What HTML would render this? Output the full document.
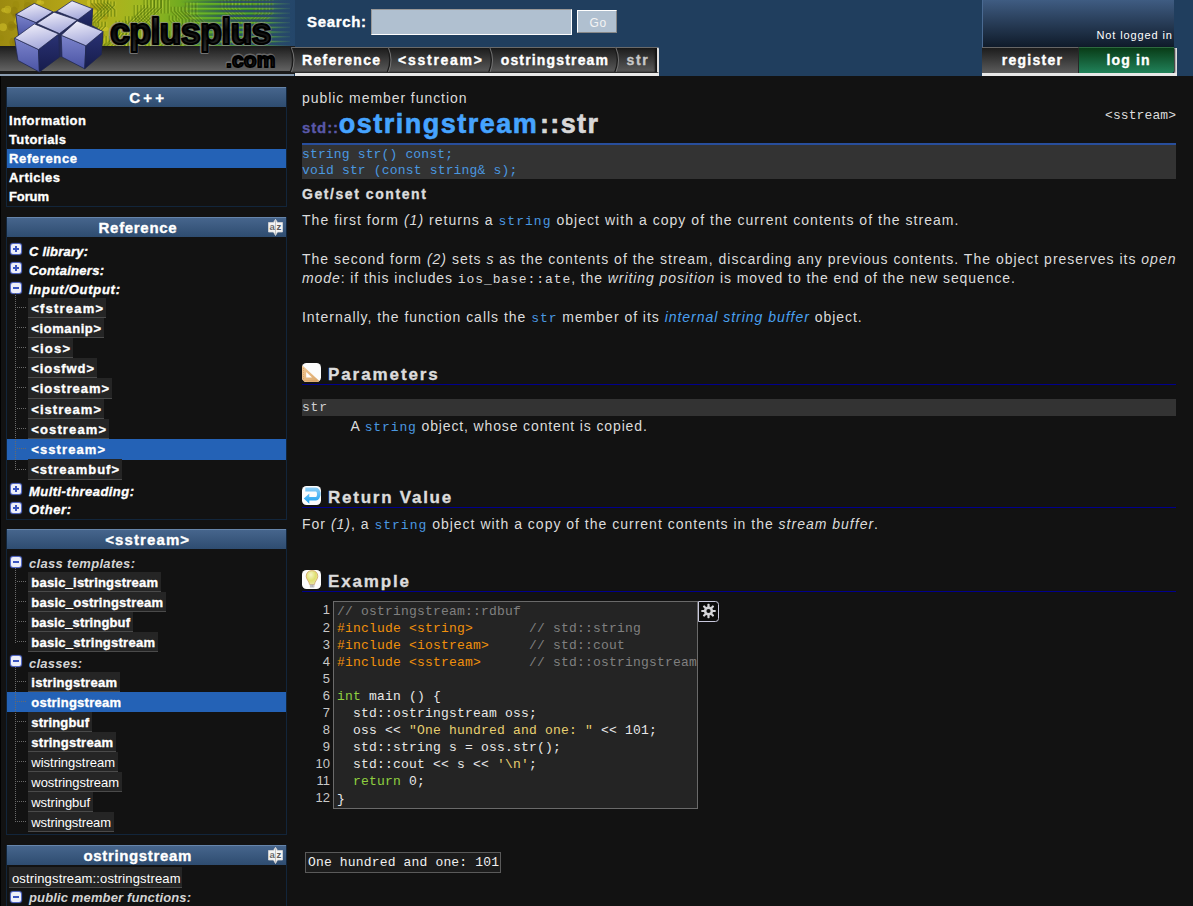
<!DOCTYPE html>
<html><head><meta charset="utf-8"><style>
*{margin:0;padding:0;box-sizing:border-box}
html,body{width:1193px;height:906px;overflow:hidden;background:#121212;font-family:"Liberation Sans",sans-serif;color:#dcdcdc}
body{position:relative}
.t{position:absolute;white-space:pre;line-height:normal}
.m{font-family:"Liberation Mono";font-size:13px}
#edge{position:absolute;left:0;top:0;width:1px;height:906px;background:#000}
#hdr{position:absolute;left:0;top:0;width:1193px;height:76px;background:#203e5e}
#logo{position:absolute;left:0;top:0;width:295px;height:76px;overflow:hidden}
#sinput{position:absolute;left:371px;top:9px;width:201px;height:26px;background:#b0c0d0;border-top:1px solid #999;border-left:1px solid #999;border-bottom:1px solid #fff;border-right:1px solid #fff}
#go{position:absolute;left:577px;top:10px;width:40px;height:23px;background:#b0c0d0;border-top:1px solid #fff;border-left:1px solid #fff;border-bottom:1px solid #888;border-right:1px solid #888}
#crumbs{position:absolute;left:291px;top:47px;width:368px;height:26px;background:linear-gradient(#1c1c1c,#5a5a5a);border-top:1px solid #6a6a6a;border-bottom:1px solid #2a2a2a;border-right:2px solid #e0e0e0;border-radius:0 2px 0 0;box-shadow:inset -2px 0 2px #111}
#crumbline{position:absolute;left:295px;top:73px;width:364px;height:3px;background:#e8e8e8}
#login{position:absolute;left:982px;top:0;width:192px;height:47px;background:linear-gradient(#3f5c82,#0f1b2a);border-left:1px solid #4a6a92}
#reg{position:absolute;left:982px;top:47px;width:97px;height:26px;background:linear-gradient(#1c1c1c,#5c5c5c);border-top:1px solid #666;border-right:1px solid #2a2a2a}
#lin{position:absolute;left:1079px;top:47px;width:95px;height:26px;background:linear-gradient(#093c17,#21825a);border-top:1px solid #2e6a40;border-radius:0 0 3px 0;box-shadow:1px 1px 2px #111}
#loginline{position:absolute;left:982px;top:73px;width:195px;height:3px;background:#e8e8e8}
.box{position:absolute;left:6px;width:281px;border:1px solid #12253a;border-top:none}
.bh{position:absolute;left:7px;width:279px;height:20px;background:linear-gradient(#46658c,#2e4c70);border-top:1px solid #6685ab}
.az{position:absolute;right:2px;top:1px;width:17px;height:17px}
.sel{position:absolute;left:7px;width:279px;background:#2462b6}
.pm{position:absolute;left:11px;width:10px;height:10px;border-radius:2px;background:#eceef8;box-shadow:0 0 1px 1px #5a72d8}
.pm:before{content:"";position:absolute;left:2px;top:4px;width:6px;height:2px;background:#3a54c0}
.pm.plus:after{content:"";position:absolute;left:4px;top:2px;width:2px;height:6px;background:#3a54c0}
.li{position:absolute;left:28px;background:#252525;border-bottom:1px solid #4a4a4a}
.vl{position:absolute;left:15px;width:1px;border-left:1px dotted #6a6a6a}
.hd{position:absolute;left:17px;width:9px;border-top:1px dotted #6a6a6a}
.proto{position:absolute;left:302px;width:874px;background:#333;border-top:2px solid #284e9c}
.navy{position:absolute;left:302px;width:874px;height:1px;background:#00008c}
.ico{position:absolute;left:302px;width:19px;height:19px}
.code{position:absolute;background:#242424;border:1px solid #6a6a6a}
.gear{position:absolute;width:21px;height:21px}
.out{position:absolute;border:1px solid #5a5a5a;background:#1c1c1c}
</style></head><body>
<div id="edge"></div>
<div id="hdr"></div>
<div id="logo">
<svg width="295" height="76" viewBox="0 0 295 76">
<defs>
<linearGradient id="ylw" x1="0" x2="295" y1="0" y2="0" gradientUnits="userSpaceOnUse"><stop offset="0" stop-color="#9c8a10"/><stop offset="0.27" stop-color="#b8aa18"/><stop offset="0.47" stop-color="#a0b820"/><stop offset="0.68" stop-color="#5aa420"/><stop offset="0.85" stop-color="#348a24"/><stop offset="0.95" stop-color="#2a5a62"/><stop offset="1" stop-color="#24466a"/></linearGradient>
<linearGradient id="stripe" x1="0" x2="1" y1="0" y2="0"><stop offset="0" stop-color="#2a4a6a" stop-opacity="0"/><stop offset="0.45" stop-color="#2a4a6a" stop-opacity="0.85"/><stop offset="1" stop-color="#2a4a6a" stop-opacity="1"/></linearGradient>
<linearGradient id="fade" x1="0" x2="1" y1="0" y2="0"><stop offset="0" stop-color="#24466a" stop-opacity="0"/><stop offset="1" stop-color="#24466a" stop-opacity="1"/></linearGradient>
<linearGradient id="gbar" x1="0" x2="0" y1="0" y2="1"><stop offset="0" stop-color="#1c1c1c"/><stop offset="1" stop-color="#666"/></linearGradient>
<linearGradient id="ctop" x1="0" x2="0.3" y1="0" y2="1"><stop offset="0" stop-color="#f6f4fc"/><stop offset="1" stop-color="#a8acdc"/></linearGradient>
<linearGradient id="cl" x1="0" x2="0" y1="0" y2="1"><stop offset="0" stop-color="#7c84cc"/><stop offset="1" stop-color="#4a54a4"/></linearGradient>
<linearGradient id="cr" x1="0" x2="0" y1="0" y2="1"><stop offset="0" stop-color="#2a3274"/><stop offset="1" stop-color="#161c4c"/></linearGradient>
<linearGradient id="txt" x1="0" x2="0" y1="0" y2="1"><stop offset="0" stop-color="#505050"/><stop offset="0.45" stop-color="#080808"/><stop offset="1" stop-color="#303030"/></linearGradient>
</defs>
<rect x="0" y="0" width="295" height="47" fill="url(#ylw)"/>
<ellipse cx="35.6" cy="6.9" rx="4.6" ry="2.2" fill="#8a7808" opacity="0.45"/><ellipse cx="40.2" cy="2.7" rx="4.0" ry="2.1" fill="#e0d030" opacity="0.45"/><ellipse cx="46.0" cy="11.1" rx="4.2" ry="2.2" fill="#8a7808" opacity="0.45"/><ellipse cx="104.2" cy="29.0" rx="4.3" ry="2.2" fill="#e0d030" opacity="0.45"/><ellipse cx="5.5" cy="10.2" rx="4.2" ry="2.4" fill="#e0d030" opacity="0.45"/><ellipse cx="15.9" cy="5.4" rx="3.2" ry="4.4" fill="#9a8a0c" opacity="0.45"/><ellipse cx="11.3" cy="26.3" rx="2.8" ry="2.3" fill="#8a7808" opacity="0.45"/><ellipse cx="62.1" cy="28.5" rx="4.0" ry="3.6" fill="#d8c828" opacity="0.45"/><ellipse cx="51.2" cy="42.5" rx="3.4" ry="2.7" fill="#9a8a0c" opacity="0.45"/><ellipse cx="76.9" cy="11.2" rx="4.3" ry="3.6" fill="#d8c828" opacity="0.45"/><ellipse cx="80.2" cy="13.2" rx="5.9" ry="2.4" fill="#e0d030" opacity="0.45"/><ellipse cx="18.1" cy="15.7" rx="5.7" ry="3.3" fill="#8a7808" opacity="0.45"/><ellipse cx="84.1" cy="26.4" rx="5.5" ry="2.9" fill="#d8c828" opacity="0.45"/><ellipse cx="65.4" cy="26.7" rx="3.8" ry="4.5" fill="#d8c828" opacity="0.45"/><ellipse cx="52.2" cy="30.6" rx="2.2" ry="4.1" fill="#e0d030" opacity="0.45"/><ellipse cx="31.3" cy="17.7" rx="4.7" ry="2.1" fill="#e0d030" opacity="0.45"/><ellipse cx="39.1" cy="28.1" rx="4.0" ry="2.7" fill="#d8c828" opacity="0.45"/><ellipse cx="14.2" cy="11.4" rx="3.6" ry="4.6" fill="#8a7808" opacity="0.45"/><ellipse cx="18.3" cy="18.5" rx="3.1" ry="2.4" fill="#e0d030" opacity="0.45"/><ellipse cx="95.0" cy="12.8" rx="3.7" ry="3.1" fill="#e0d030" opacity="0.45"/><ellipse cx="105.4" cy="6.9" rx="2.7" ry="2.7" fill="#9a8a0c" opacity="0.45"/><ellipse cx="1.3" cy="38.2" rx="2.7" ry="2.8" fill="#9a8a0c" opacity="0.45"/><ellipse cx="46.1" cy="17.0" rx="4.3" ry="4.9" fill="#8a7808" opacity="0.45"/><ellipse cx="50.2" cy="40.1" rx="5.8" ry="4.0" fill="#e0d030" opacity="0.45"/><ellipse cx="43.8" cy="18.1" rx="3.9" ry="3.2" fill="#9a8a0c" opacity="0.45"/><ellipse cx="7.4" cy="9.6" rx="2.6" ry="3.0" fill="#8a7808" opacity="0.45"/><ellipse cx="11.3" cy="26.1" rx="4.1" ry="4.8" fill="#8a7808" opacity="0.45"/><ellipse cx="7.7" cy="9.6" rx="3.5" ry="3.9" fill="#d8c828" opacity="0.45"/><ellipse cx="66.3" cy="21.8" rx="2.5" ry="3.5" fill="#e0d030" opacity="0.45"/><ellipse cx="52.8" cy="14.3" rx="2.6" ry="4.2" fill="#d8c828" opacity="0.45"/><ellipse cx="52.6" cy="31.8" rx="4.1" ry="2.6" fill="#d8c828" opacity="0.45"/><ellipse cx="16.1" cy="25.0" rx="2.1" ry="3.6" fill="#8a7808" opacity="0.45"/><ellipse cx="76.6" cy="12.0" rx="3.5" ry="2.5" fill="#9a8a0c" opacity="0.45"/><ellipse cx="58.6" cy="35.8" rx="3.3" ry="2.7" fill="#9a8a0c" opacity="0.45"/><ellipse cx="88.7" cy="37.6" rx="5.0" ry="2.7" fill="#e0d030" opacity="0.45"/><ellipse cx="39.1" cy="1.3" rx="2.1" ry="2.8" fill="#d8c828" opacity="0.45"/><ellipse cx="21.3" cy="27.8" rx="3.4" ry="4.4" fill="#d8c828" opacity="0.45"/><ellipse cx="105.1" cy="16.8" rx="2.9" ry="2.7" fill="#9a8a0c" opacity="0.45"/><ellipse cx="37.2" cy="22.2" rx="5.9" ry="3.8" fill="#8a7808" opacity="0.45"/><ellipse cx="52.7" cy="30.0" rx="5.2" ry="2.3" fill="#8a7808" opacity="0.45"/><ellipse cx="100.1" cy="36.0" rx="5.0" ry="3.4" fill="#9a8a0c" opacity="0.45"/><ellipse cx="47.7" cy="29.2" rx="2.3" ry="4.8" fill="#e0d030" opacity="0.45"/><ellipse cx="50.9" cy="34.2" rx="2.3" ry="2.5" fill="#9a8a0c" opacity="0.45"/><ellipse cx="3.0" cy="27.2" rx="3.9" ry="4.0" fill="#e0d030" opacity="0.45"/><ellipse cx="72.3" cy="16.1" rx="4.2" ry="2.4" fill="#8a7808" opacity="0.45"/><ellipse cx="87.9" cy="33.4" rx="2.4" ry="4.2" fill="#9a8a0c" opacity="0.45"/><ellipse cx="47.7" cy="40.1" rx="5.3" ry="2.6" fill="#d8c828" opacity="0.45"/><ellipse cx="23.4" cy="23.1" rx="5.1" ry="3.0" fill="#e0d030" opacity="0.45"/><ellipse cx="91.8" cy="2.8" rx="5.0" ry="4.7" fill="#e0d030" opacity="0.45"/><ellipse cx="91.0" cy="40.4" rx="2.5" ry="2.5" fill="#8a7808" opacity="0.45"/><ellipse cx="96.0" cy="35.7" rx="4.4" ry="4.3" fill="#9a8a0c" opacity="0.45"/><ellipse cx="19.0" cy="21.8" rx="4.9" ry="3.7" fill="#d8c828" opacity="0.45"/><ellipse cx="75.1" cy="24.4" rx="3.9" ry="4.3" fill="#8a7808" opacity="0.45"/><ellipse cx="27.3" cy="12.7" rx="5.1" ry="3.5" fill="#8a7808" opacity="0.45"/><ellipse cx="83.6" cy="42.0" rx="3.8" ry="3.8" fill="#9a8a0c" opacity="0.45"/><ellipse cx="76.2" cy="20.8" rx="4.1" ry="3.4" fill="#9a8a0c" opacity="0.45"/><ellipse cx="76.9" cy="40.3" rx="5.8" ry="2.8" fill="#9a8a0c" opacity="0.45"/><ellipse cx="92.4" cy="6.3" rx="2.5" ry="3.3" fill="#8a7808" opacity="0.45"/><ellipse cx="73.8" cy="19.7" rx="2.9" ry="2.9" fill="#8a7808" opacity="0.45"/><ellipse cx="98.7" cy="7.1" rx="4.9" ry="4.0" fill="#9a8a0c" opacity="0.45"/><ellipse cx="27.8" cy="6.3" rx="3.9" ry="4.2" fill="#8a7808" opacity="0.45"/><ellipse cx="43.8" cy="22.4" rx="6.0" ry="4.5" fill="#9a8a0c" opacity="0.45"/><ellipse cx="77.7" cy="45.7" rx="3.6" ry="3.3" fill="#d8c828" opacity="0.45"/><ellipse cx="35.0" cy="33.2" rx="2.1" ry="3.7" fill="#e0d030" opacity="0.45"/><ellipse cx="77.3" cy="17.7" rx="4.1" ry="2.9" fill="#8a7808" opacity="0.45"/><ellipse cx="12.4" cy="42.3" rx="2.9" ry="4.6" fill="#8a7808" opacity="0.45"/><ellipse cx="29.2" cy="1.8" rx="5.1" ry="2.8" fill="#9a8a0c" opacity="0.45"/><ellipse cx="90.2" cy="39.1" rx="4.7" ry="4.8" fill="#e0d030" opacity="0.45"/><ellipse cx="16.4" cy="42.3" rx="4.3" ry="4.1" fill="#8a7808" opacity="0.45"/><ellipse cx="30.7" cy="36.8" rx="2.7" ry="4.7" fill="#d8c828" opacity="0.45"/>

<path d="M178.4,34.1 L178.4,46.5 L193.7,61.8 L193.7,68.3" stroke="#5a7a0c" stroke-width="1.3" fill="none" opacity="0.5"/><path d="M179.9,34.1 L179.9,46.5 L195.2,61.8 L195.2,68.3" stroke="#e0e858" stroke-width="0.8" fill="none" opacity="0.3"/><path d="M181.8,34.1 L181.8,46.5 L197.1,61.8 L197.1,68.3" stroke="#4a6a08" stroke-width="1.3" fill="none" opacity="0.5"/><path d="M183.3,34.1 L183.3,46.5 L198.6,61.8 L198.6,68.3" stroke="#e0e858" stroke-width="0.8" fill="none" opacity="0.3"/><path d="M185.2,34.1 L185.2,46.5 L200.5,61.8 L200.5,68.3" stroke="#5a7a0c" stroke-width="1.3" fill="none" opacity="0.5"/><path d="M186.7,34.1 L186.7,46.5 L202.0,61.8 L202.0,68.3" stroke="#e0e858" stroke-width="0.8" fill="none" opacity="0.3"/><path d="M231.2,5.2 L231.2,-7.5 L241.7,-18.0 L241.7,-23.1" stroke="#5a7a0c" stroke-width="1.3" fill="none" opacity="0.5"/><path d="M232.7,5.2 L232.7,-7.5 L243.2,-18.0 L243.2,-23.1" stroke="#e0e858" stroke-width="0.8" fill="none" opacity="0.3"/><path d="M234.6,5.2 L234.6,-7.5 L245.1,-18.0 L245.1,-23.1" stroke="#4a6a08" stroke-width="1.3" fill="none" opacity="0.5"/><path d="M236.1,5.2 L236.1,-7.5 L246.6,-18.0 L246.6,-23.1" stroke="#e0e858" stroke-width="0.8" fill="none" opacity="0.3"/><path d="M238.0,5.2 L238.0,-7.5 L248.5,-18.0 L248.5,-23.1" stroke="#5a7a0c" stroke-width="1.3" fill="none" opacity="0.5"/><path d="M239.5,5.2 L239.5,-7.5 L250.0,-18.0 L250.0,-23.1" stroke="#e0e858" stroke-width="0.8" fill="none" opacity="0.3"/><path d="M241.4,5.2 L241.4,-7.5 L251.9,-18.0 L251.9,-23.1" stroke="#4a6a08" stroke-width="1.3" fill="none" opacity="0.5"/><path d="M242.9,5.2 L242.9,-7.5 L253.4,-18.0 L253.4,-23.1" stroke="#e0e858" stroke-width="0.8" fill="none" opacity="0.3"/><path d="M244.8,5.2 L244.8,-7.5 L255.3,-18.0 L255.3,-23.1" stroke="#5a7a0c" stroke-width="1.3" fill="none" opacity="0.5"/><path d="M246.3,5.2 L246.3,-7.5 L256.8,-18.0 L256.8,-23.1" stroke="#e0e858" stroke-width="0.8" fill="none" opacity="0.3"/><path d="M248.2,5.2 L248.2,-7.5 L258.7,-18.0 L258.7,-23.1" stroke="#4a6a08" stroke-width="1.3" fill="none" opacity="0.5"/><path d="M249.7,5.2 L249.7,-7.5 L260.2,-18.0 L260.2,-23.1" stroke="#e0e858" stroke-width="0.8" fill="none" opacity="0.3"/><path d="M62.5,10.0 L62.5,15.8 L78.9,32.2 L78.9,40.1" stroke="#5a7a0c" stroke-width="1.3" fill="none" opacity="0.5"/><path d="M64.0,10.0 L64.0,15.8 L80.4,32.2 L80.4,40.1" stroke="#e0e858" stroke-width="0.8" fill="none" opacity="0.3"/><path d="M65.9,10.0 L65.9,15.8 L82.3,32.2 L82.3,40.1" stroke="#4a6a08" stroke-width="1.3" fill="none" opacity="0.5"/><path d="M67.4,10.0 L67.4,15.8 L83.8,32.2 L83.8,40.1" stroke="#e0e858" stroke-width="0.8" fill="none" opacity="0.3"/><path d="M69.3,10.0 L69.3,15.8 L85.7,32.2 L85.7,40.1" stroke="#5a7a0c" stroke-width="1.3" fill="none" opacity="0.5"/><path d="M70.8,10.0 L70.8,15.8 L87.2,32.2 L87.2,40.1" stroke="#e0e858" stroke-width="0.8" fill="none" opacity="0.3"/><path d="M72.7,10.0 L72.7,15.8 L89.1,32.2 L89.1,40.1" stroke="#4a6a08" stroke-width="1.3" fill="none" opacity="0.5"/><path d="M74.2,10.0 L74.2,15.8 L90.6,32.2 L90.6,40.1" stroke="#e0e858" stroke-width="0.8" fill="none" opacity="0.3"/><path d="M76.1,10.0 L76.1,15.8 L92.5,32.2 L92.5,40.1" stroke="#5a7a0c" stroke-width="1.3" fill="none" opacity="0.5"/><path d="M77.6,10.0 L77.6,15.8 L94.0,32.2 L94.0,40.1" stroke="#e0e858" stroke-width="0.8" fill="none" opacity="0.3"/><path d="M86.4,28.4 L86.4,23.1 L104.0,5.4 L104.0,1.4" stroke="#5a7a0c" stroke-width="1.3" fill="none" opacity="0.5"/><path d="M87.9,28.4 L87.9,23.1 L105.5,5.4 L105.5,1.4" stroke="#e0e858" stroke-width="0.8" fill="none" opacity="0.3"/><path d="M89.8,28.4 L89.8,23.1 L107.4,5.4 L107.4,1.4" stroke="#4a6a08" stroke-width="1.3" fill="none" opacity="0.5"/><path d="M91.3,28.4 L91.3,23.1 L108.9,5.4 L108.9,1.4" stroke="#e0e858" stroke-width="0.8" fill="none" opacity="0.3"/><path d="M93.2,28.4 L93.2,23.1 L110.8,5.4 L110.8,1.4" stroke="#5a7a0c" stroke-width="1.3" fill="none" opacity="0.5"/><path d="M94.7,28.4 L94.7,23.1 L112.3,5.4 L112.3,1.4" stroke="#e0e858" stroke-width="0.8" fill="none" opacity="0.3"/><path d="M96.6,28.4 L96.6,23.1 L114.2,5.4 L114.2,1.4" stroke="#4a6a08" stroke-width="1.3" fill="none" opacity="0.5"/><path d="M98.1,28.4 L98.1,23.1 L115.7,5.4 L115.7,1.4" stroke="#e0e858" stroke-width="0.8" fill="none" opacity="0.3"/><path d="M242.4,7.6 L242.4,0.7 L260.0,-16.8 L260.0,-26.2" stroke="#5a7a0c" stroke-width="1.3" fill="none" opacity="0.5"/><path d="M243.9,7.6 L243.9,0.7 L261.5,-16.8 L261.5,-26.2" stroke="#e0e858" stroke-width="0.8" fill="none" opacity="0.3"/><path d="M245.8,7.6 L245.8,0.7 L263.4,-16.8 L263.4,-26.2" stroke="#4a6a08" stroke-width="1.3" fill="none" opacity="0.5"/><path d="M247.3,7.6 L247.3,0.7 L264.9,-16.8 L264.9,-26.2" stroke="#e0e858" stroke-width="0.8" fill="none" opacity="0.3"/><path d="M249.2,7.6 L249.2,0.7 L266.8,-16.8 L266.8,-26.2" stroke="#5a7a0c" stroke-width="1.3" fill="none" opacity="0.5"/><path d="M250.7,7.6 L250.7,0.7 L268.3,-16.8 L268.3,-26.2" stroke="#e0e858" stroke-width="0.8" fill="none" opacity="0.3"/><path d="M252.6,7.6 L252.6,0.7 L270.2,-16.8 L270.2,-26.2" stroke="#4a6a08" stroke-width="1.3" fill="none" opacity="0.5"/><path d="M254.1,7.6 L254.1,0.7 L271.7,-16.8 L271.7,-26.2" stroke="#e0e858" stroke-width="0.8" fill="none" opacity="0.3"/><path d="M94.5,44.6 L94.5,58.2 L77.8,74.9 L77.8,81.9" stroke="#5a7a0c" stroke-width="1.3" fill="none" opacity="0.5"/><path d="M96.0,44.6 L96.0,58.2 L79.3,74.9 L79.3,81.9" stroke="#e0e858" stroke-width="0.8" fill="none" opacity="0.3"/><path d="M97.9,44.6 L97.9,58.2 L81.2,74.9 L81.2,81.9" stroke="#4a6a08" stroke-width="1.3" fill="none" opacity="0.5"/><path d="M99.4,44.6 L99.4,58.2 L82.7,74.9 L82.7,81.9" stroke="#e0e858" stroke-width="0.8" fill="none" opacity="0.3"/><path d="M101.3,44.6 L101.3,58.2 L84.6,74.9 L84.6,81.9" stroke="#5a7a0c" stroke-width="1.3" fill="none" opacity="0.5"/><path d="M102.8,44.6 L102.8,58.2 L86.1,74.9 L86.1,81.9" stroke="#e0e858" stroke-width="0.8" fill="none" opacity="0.3"/><path d="M104.7,44.6 L104.7,58.2 L88.0,74.9 L88.0,81.9" stroke="#4a6a08" stroke-width="1.3" fill="none" opacity="0.5"/><path d="M106.2,44.6 L106.2,58.2 L89.5,74.9 L89.5,81.9" stroke="#e0e858" stroke-width="0.8" fill="none" opacity="0.3"/><path d="M138.8,43.0 L138.8,47.7 L148.4,57.3 L148.4,67.3" stroke="#5a7a0c" stroke-width="1.3" fill="none" opacity="0.5"/><path d="M140.3,43.0 L140.3,47.7 L149.9,57.3 L149.9,67.3" stroke="#e0e858" stroke-width="0.8" fill="none" opacity="0.3"/><path d="M142.2,43.0 L142.2,47.7 L151.8,57.3 L151.8,67.3" stroke="#4a6a08" stroke-width="1.3" fill="none" opacity="0.5"/><path d="M143.7,43.0 L143.7,47.7 L153.3,57.3 L153.3,67.3" stroke="#e0e858" stroke-width="0.8" fill="none" opacity="0.3"/><path d="M145.6,43.0 L145.6,47.7 L155.2,57.3 L155.2,67.3" stroke="#5a7a0c" stroke-width="1.3" fill="none" opacity="0.5"/><path d="M147.1,43.0 L147.1,47.7 L156.7,57.3 L156.7,67.3" stroke="#e0e858" stroke-width="0.8" fill="none" opacity="0.3"/><path d="M149.0,43.0 L149.0,47.7 L158.6,57.3 L158.6,67.3" stroke="#4a6a08" stroke-width="1.3" fill="none" opacity="0.5"/><path d="M150.5,43.0 L150.5,47.7 L160.1,57.3 L160.1,67.3" stroke="#e0e858" stroke-width="0.8" fill="none" opacity="0.3"/><path d="M152.4,43.0 L152.4,47.7 L162.0,57.3 L162.0,67.3" stroke="#5a7a0c" stroke-width="1.3" fill="none" opacity="0.5"/><path d="M153.9,43.0 L153.9,47.7 L163.5,57.3 L163.5,67.3" stroke="#e0e858" stroke-width="0.8" fill="none" opacity="0.3"/><path d="M173.2,32.6 L173.2,39.7 L157.4,55.5 L157.4,64.3" stroke="#5a7a0c" stroke-width="1.3" fill="none" opacity="0.5"/><path d="M174.7,32.6 L174.7,39.7 L158.9,55.5 L158.9,64.3" stroke="#e0e858" stroke-width="0.8" fill="none" opacity="0.3"/><path d="M176.6,32.6 L176.6,39.7 L160.8,55.5 L160.8,64.3" stroke="#4a6a08" stroke-width="1.3" fill="none" opacity="0.5"/><path d="M178.1,32.6 L178.1,39.7 L162.3,55.5 L162.3,64.3" stroke="#e0e858" stroke-width="0.8" fill="none" opacity="0.3"/><path d="M180.0,32.6 L180.0,39.7 L164.2,55.5 L164.2,64.3" stroke="#5a7a0c" stroke-width="1.3" fill="none" opacity="0.5"/><path d="M181.5,32.6 L181.5,39.7 L165.7,55.5 L165.7,64.3" stroke="#e0e858" stroke-width="0.8" fill="none" opacity="0.3"/><path d="M95.1,21.7 L95.1,26.3 L77.4,44.0 L77.4,48.2" stroke="#5a7a0c" stroke-width="1.3" fill="none" opacity="0.5"/><path d="M96.6,21.7 L96.6,26.3 L78.9,44.0 L78.9,48.2" stroke="#e0e858" stroke-width="0.8" fill="none" opacity="0.3"/><path d="M98.5,21.7 L98.5,26.3 L80.8,44.0 L80.8,48.2" stroke="#4a6a08" stroke-width="1.3" fill="none" opacity="0.5"/><path d="M100.0,21.7 L100.0,26.3 L82.3,44.0 L82.3,48.2" stroke="#e0e858" stroke-width="0.8" fill="none" opacity="0.3"/><path d="M101.9,21.7 L101.9,26.3 L84.2,44.0 L84.2,48.2" stroke="#5a7a0c" stroke-width="1.3" fill="none" opacity="0.5"/><path d="M103.4,21.7 L103.4,26.3 L85.7,44.0 L85.7,48.2" stroke="#e0e858" stroke-width="0.8" fill="none" opacity="0.3"/><path d="M105.3,21.7 L105.3,26.3 L87.6,44.0 L87.6,48.2" stroke="#4a6a08" stroke-width="1.3" fill="none" opacity="0.5"/><path d="M106.8,21.7 L106.8,26.3 L89.1,44.0 L89.1,48.2" stroke="#e0e858" stroke-width="0.8" fill="none" opacity="0.3"/><path d="M220.5,0.8 L220.5,8.5 L233.5,21.4 L233.5,25.5" stroke="#5a7a0c" stroke-width="1.3" fill="none" opacity="0.5"/><path d="M222.0,0.8 L222.0,8.5 L235.0,21.4 L235.0,25.5" stroke="#e0e858" stroke-width="0.8" fill="none" opacity="0.3"/><path d="M223.9,0.8 L223.9,8.5 L236.9,21.4 L236.9,25.5" stroke="#4a6a08" stroke-width="1.3" fill="none" opacity="0.5"/><path d="M225.4,0.8 L225.4,8.5 L238.4,21.4 L238.4,25.5" stroke="#e0e858" stroke-width="0.8" fill="none" opacity="0.3"/><path d="M227.3,0.8 L227.3,8.5 L240.3,21.4 L240.3,25.5" stroke="#5a7a0c" stroke-width="1.3" fill="none" opacity="0.5"/><path d="M228.8,0.8 L228.8,8.5 L241.8,21.4 L241.8,25.5" stroke="#e0e858" stroke-width="0.8" fill="none" opacity="0.3"/><path d="M230.7,0.8 L230.7,8.5 L243.7,21.4 L243.7,25.5" stroke="#4a6a08" stroke-width="1.3" fill="none" opacity="0.5"/><path d="M232.2,0.8 L232.2,8.5 L245.2,21.4 L245.2,25.5" stroke="#e0e858" stroke-width="0.8" fill="none" opacity="0.3"/><path d="M234.1,0.8 L234.1,8.5 L247.1,21.4 L247.1,25.5" stroke="#5a7a0c" stroke-width="1.3" fill="none" opacity="0.5"/><path d="M235.6,0.8 L235.6,8.5 L248.6,21.4 L248.6,25.5" stroke="#e0e858" stroke-width="0.8" fill="none" opacity="0.3"/><path d="M237.5,0.8 L237.5,8.5 L250.5,21.4 L250.5,25.5" stroke="#4a6a08" stroke-width="1.3" fill="none" opacity="0.5"/><path d="M239.0,0.8 L239.0,8.5 L252.0,21.4 L252.0,25.5" stroke="#e0e858" stroke-width="0.8" fill="none" opacity="0.3"/><path d="M194.5,28.7 L194.5,23.5 L185.5,14.5 L185.5,2.4" stroke="#5a7a0c" stroke-width="1.3" fill="none" opacity="0.5"/><path d="M196.0,28.7 L196.0,23.5 L187.0,14.5 L187.0,2.4" stroke="#e0e858" stroke-width="0.8" fill="none" opacity="0.3"/><path d="M197.9,28.7 L197.9,23.5 L188.9,14.5 L188.9,2.4" stroke="#4a6a08" stroke-width="1.3" fill="none" opacity="0.5"/><path d="M199.4,28.7 L199.4,23.5 L190.4,14.5 L190.4,2.4" stroke="#e0e858" stroke-width="0.8" fill="none" opacity="0.3"/><path d="M201.3,28.7 L201.3,23.5 L192.3,14.5 L192.3,2.4" stroke="#5a7a0c" stroke-width="1.3" fill="none" opacity="0.5"/><path d="M202.8,28.7 L202.8,23.5 L193.8,14.5 L193.8,2.4" stroke="#e0e858" stroke-width="0.8" fill="none" opacity="0.3"/><path d="M204.7,28.7 L204.7,23.5 L195.7,14.5 L195.7,2.4" stroke="#4a6a08" stroke-width="1.3" fill="none" opacity="0.5"/><path d="M206.2,28.7 L206.2,23.5 L197.2,14.5 L197.2,2.4" stroke="#e0e858" stroke-width="0.8" fill="none" opacity="0.3"/><path d="M125.4,16.3 L125.4,28.1 L118.1,35.4 L118.1,46.9" stroke="#5a7a0c" stroke-width="1.3" fill="none" opacity="0.5"/><path d="M126.9,16.3 L126.9,28.1 L119.6,35.4 L119.6,46.9" stroke="#e0e858" stroke-width="0.8" fill="none" opacity="0.3"/><path d="M128.8,16.3 L128.8,28.1 L121.5,35.4 L121.5,46.9" stroke="#4a6a08" stroke-width="1.3" fill="none" opacity="0.5"/><path d="M130.3,16.3 L130.3,28.1 L123.0,35.4 L123.0,46.9" stroke="#e0e858" stroke-width="0.8" fill="none" opacity="0.3"/><path d="M132.2,16.3 L132.2,28.1 L124.9,35.4 L124.9,46.9" stroke="#5a7a0c" stroke-width="1.3" fill="none" opacity="0.5"/><path d="M133.7,16.3 L133.7,28.1 L126.4,35.4 L126.4,46.9" stroke="#e0e858" stroke-width="0.8" fill="none" opacity="0.3"/><path d="M135.6,16.3 L135.6,28.1 L128.3,35.4 L128.3,46.9" stroke="#4a6a08" stroke-width="1.3" fill="none" opacity="0.5"/><path d="M137.1,16.3 L137.1,28.1 L129.8,35.4 L129.8,46.9" stroke="#e0e858" stroke-width="0.8" fill="none" opacity="0.3"/><path d="M139.0,16.3 L139.0,28.1 L131.7,35.4 L131.7,46.9" stroke="#5a7a0c" stroke-width="1.3" fill="none" opacity="0.5"/><path d="M140.5,16.3 L140.5,28.1 L133.2,35.4 L133.2,46.9" stroke="#e0e858" stroke-width="0.8" fill="none" opacity="0.3"/><path d="M223.3,1.7 L223.3,-4.4 L235.5,-16.6 L235.5,-24.2" stroke="#5a7a0c" stroke-width="1.3" fill="none" opacity="0.5"/><path d="M224.8,1.7 L224.8,-4.4 L237.0,-16.6 L237.0,-24.2" stroke="#e0e858" stroke-width="0.8" fill="none" opacity="0.3"/><path d="M226.7,1.7 L226.7,-4.4 L238.9,-16.6 L238.9,-24.2" stroke="#4a6a08" stroke-width="1.3" fill="none" opacity="0.5"/><path d="M228.2,1.7 L228.2,-4.4 L240.4,-16.6 L240.4,-24.2" stroke="#e0e858" stroke-width="0.8" fill="none" opacity="0.3"/><path d="M230.1,1.7 L230.1,-4.4 L242.3,-16.6 L242.3,-24.2" stroke="#5a7a0c" stroke-width="1.3" fill="none" opacity="0.5"/><path d="M231.6,1.7 L231.6,-4.4 L243.8,-16.6 L243.8,-24.2" stroke="#e0e858" stroke-width="0.8" fill="none" opacity="0.3"/><path d="M124.6,42.5 L124.6,49.6 L134.4,59.4 L134.4,65.2" stroke="#5a7a0c" stroke-width="1.3" fill="none" opacity="0.5"/><path d="M126.1,42.5 L126.1,49.6 L135.9,59.4 L135.9,65.2" stroke="#e0e858" stroke-width="0.8" fill="none" opacity="0.3"/><path d="M128.0,42.5 L128.0,49.6 L137.8,59.4 L137.8,65.2" stroke="#4a6a08" stroke-width="1.3" fill="none" opacity="0.5"/><path d="M129.5,42.5 L129.5,49.6 L139.3,59.4 L139.3,65.2" stroke="#e0e858" stroke-width="0.8" fill="none" opacity="0.3"/><path d="M131.4,42.5 L131.4,49.6 L141.2,59.4 L141.2,65.2" stroke="#5a7a0c" stroke-width="1.3" fill="none" opacity="0.5"/><path d="M132.9,42.5 L132.9,49.6 L142.7,59.4 L142.7,65.2" stroke="#e0e858" stroke-width="0.8" fill="none" opacity="0.3"/><path d="M179.1,33.2 L179.1,19.2 L171.2,11.3 L171.2,6.8" stroke="#5a7a0c" stroke-width="1.3" fill="none" opacity="0.5"/><path d="M180.6,33.2 L180.6,19.2 L172.7,11.3 L172.7,6.8" stroke="#e0e858" stroke-width="0.8" fill="none" opacity="0.3"/><path d="M182.5,33.2 L182.5,19.2 L174.6,11.3 L174.6,6.8" stroke="#4a6a08" stroke-width="1.3" fill="none" opacity="0.5"/><path d="M184.0,33.2 L184.0,19.2 L176.1,11.3 L176.1,6.8" stroke="#e0e858" stroke-width="0.8" fill="none" opacity="0.3"/><path d="M185.9,33.2 L185.9,19.2 L178.0,11.3 L178.0,6.8" stroke="#5a7a0c" stroke-width="1.3" fill="none" opacity="0.5"/><path d="M187.4,33.2 L187.4,19.2 L179.5,11.3 L179.5,6.8" stroke="#e0e858" stroke-width="0.8" fill="none" opacity="0.3"/><path d="M189.3,33.2 L189.3,19.2 L181.4,11.3 L181.4,6.8" stroke="#4a6a08" stroke-width="1.3" fill="none" opacity="0.5"/><path d="M190.8,33.2 L190.8,19.2 L182.9,11.3 L182.9,6.8" stroke="#e0e858" stroke-width="0.8" fill="none" opacity="0.3"/><path d="M192.7,33.2 L192.7,19.2 L184.8,11.3 L184.8,6.8" stroke="#5a7a0c" stroke-width="1.3" fill="none" opacity="0.5"/><path d="M194.2,33.2 L194.2,19.2 L186.3,11.3 L186.3,6.8" stroke="#e0e858" stroke-width="0.8" fill="none" opacity="0.3"/><path d="M66.0,34.1 L66.0,46.3 L77.5,57.8 L77.5,66.0" stroke="#5a7a0c" stroke-width="1.3" fill="none" opacity="0.5"/><path d="M67.5,34.1 L67.5,46.3 L79.0,57.8 L79.0,66.0" stroke="#e0e858" stroke-width="0.8" fill="none" opacity="0.3"/><path d="M69.4,34.1 L69.4,46.3 L80.9,57.8 L80.9,66.0" stroke="#4a6a08" stroke-width="1.3" fill="none" opacity="0.5"/><path d="M70.9,34.1 L70.9,46.3 L82.4,57.8 L82.4,66.0" stroke="#e0e858" stroke-width="0.8" fill="none" opacity="0.3"/><path d="M72.8,34.1 L72.8,46.3 L84.3,57.8 L84.3,66.0" stroke="#5a7a0c" stroke-width="1.3" fill="none" opacity="0.5"/><path d="M74.3,34.1 L74.3,46.3 L85.8,57.8 L85.8,66.0" stroke="#e0e858" stroke-width="0.8" fill="none" opacity="0.3"/><path d="M76.2,34.1 L76.2,46.3 L87.7,57.8 L87.7,66.0" stroke="#4a6a08" stroke-width="1.3" fill="none" opacity="0.5"/><path d="M77.7,34.1 L77.7,46.3 L89.2,57.8 L89.2,66.0" stroke="#e0e858" stroke-width="0.8" fill="none" opacity="0.3"/><path d="M79.6,34.1 L79.6,46.3 L91.1,57.8 L91.1,66.0" stroke="#5a7a0c" stroke-width="1.3" fill="none" opacity="0.5"/><path d="M81.1,34.1 L81.1,46.3 L92.6,57.8 L92.6,66.0" stroke="#e0e858" stroke-width="0.8" fill="none" opacity="0.3"/><path d="M246.0,29.4 L246.0,22.0 L254.5,13.5 L254.5,-0.3" stroke="#5a7a0c" stroke-width="1.3" fill="none" opacity="0.5"/><path d="M247.5,29.4 L247.5,22.0 L256.0,13.5 L256.0,-0.3" stroke="#e0e858" stroke-width="0.8" fill="none" opacity="0.3"/><path d="M249.4,29.4 L249.4,22.0 L257.9,13.5 L257.9,-0.3" stroke="#4a6a08" stroke-width="1.3" fill="none" opacity="0.5"/><path d="M250.9,29.4 L250.9,22.0 L259.4,13.5 L259.4,-0.3" stroke="#e0e858" stroke-width="0.8" fill="none" opacity="0.3"/><path d="M252.8,29.4 L252.8,22.0 L261.3,13.5 L261.3,-0.3" stroke="#5a7a0c" stroke-width="1.3" fill="none" opacity="0.5"/><path d="M254.3,29.4 L254.3,22.0 L262.8,13.5 L262.8,-0.3" stroke="#e0e858" stroke-width="0.8" fill="none" opacity="0.3"/><path d="M256.2,29.4 L256.2,22.0 L264.7,13.5 L264.7,-0.3" stroke="#4a6a08" stroke-width="1.3" fill="none" opacity="0.5"/><path d="M257.7,29.4 L257.7,22.0 L266.2,13.5 L266.2,-0.3" stroke="#e0e858" stroke-width="0.8" fill="none" opacity="0.3"/><path d="M259.6,29.4 L259.6,22.0 L268.1,13.5 L268.1,-0.3" stroke="#5a7a0c" stroke-width="1.3" fill="none" opacity="0.5"/><path d="M261.1,29.4 L261.1,22.0 L269.6,13.5 L269.6,-0.3" stroke="#e0e858" stroke-width="0.8" fill="none" opacity="0.3"/><path d="M263.0,29.4 L263.0,22.0 L271.5,13.5 L271.5,-0.3" stroke="#4a6a08" stroke-width="1.3" fill="none" opacity="0.5"/><path d="M264.5,29.4 L264.5,22.0 L273.0,13.5 L273.0,-0.3" stroke="#e0e858" stroke-width="0.8" fill="none" opacity="0.3"/><path d="M179.8,36.2 L179.8,30.6 L169.3,20.1 L169.3,15.5" stroke="#5a7a0c" stroke-width="1.3" fill="none" opacity="0.5"/><path d="M181.3,36.2 L181.3,30.6 L170.8,20.1 L170.8,15.5" stroke="#e0e858" stroke-width="0.8" fill="none" opacity="0.3"/><path d="M183.2,36.2 L183.2,30.6 L172.7,20.1 L172.7,15.5" stroke="#4a6a08" stroke-width="1.3" fill="none" opacity="0.5"/><path d="M184.7,36.2 L184.7,30.6 L174.2,20.1 L174.2,15.5" stroke="#e0e858" stroke-width="0.8" fill="none" opacity="0.3"/><path d="M186.6,36.2 L186.6,30.6 L176.1,20.1 L176.1,15.5" stroke="#5a7a0c" stroke-width="1.3" fill="none" opacity="0.5"/><path d="M188.1,36.2 L188.1,30.6 L177.6,20.1 L177.6,15.5" stroke="#e0e858" stroke-width="0.8" fill="none" opacity="0.3"/><path d="M116.0,20.8 L116.0,34.6 L104.6,46.0 L104.6,54.9" stroke="#5a7a0c" stroke-width="1.3" fill="none" opacity="0.5"/><path d="M117.5,20.8 L117.5,34.6 L106.1,46.0 L106.1,54.9" stroke="#e0e858" stroke-width="0.8" fill="none" opacity="0.3"/><path d="M119.4,20.8 L119.4,34.6 L108.0,46.0 L108.0,54.9" stroke="#4a6a08" stroke-width="1.3" fill="none" opacity="0.5"/><path d="M120.9,20.8 L120.9,34.6 L109.5,46.0 L109.5,54.9" stroke="#e0e858" stroke-width="0.8" fill="none" opacity="0.3"/><path d="M122.8,20.8 L122.8,34.6 L111.4,46.0 L111.4,54.9" stroke="#5a7a0c" stroke-width="1.3" fill="none" opacity="0.5"/><path d="M124.3,20.8 L124.3,34.6 L112.9,46.0 L112.9,54.9" stroke="#e0e858" stroke-width="0.8" fill="none" opacity="0.3"/><path d="M126.2,20.8 L126.2,34.6 L114.8,46.0 L114.8,54.9" stroke="#4a6a08" stroke-width="1.3" fill="none" opacity="0.5"/><path d="M127.7,20.8 L127.7,34.6 L116.3,46.0 L116.3,54.9" stroke="#e0e858" stroke-width="0.8" fill="none" opacity="0.3"/><path d="M151.0,13.4 L151.0,0.4 L158.4,-7.0 L158.4,-19.2" stroke="#5a7a0c" stroke-width="1.3" fill="none" opacity="0.5"/><path d="M152.5,13.4 L152.5,0.4 L159.9,-7.0 L159.9,-19.2" stroke="#e0e858" stroke-width="0.8" fill="none" opacity="0.3"/><path d="M154.4,13.4 L154.4,0.4 L161.8,-7.0 L161.8,-19.2" stroke="#4a6a08" stroke-width="1.3" fill="none" opacity="0.5"/><path d="M155.9,13.4 L155.9,0.4 L163.3,-7.0 L163.3,-19.2" stroke="#e0e858" stroke-width="0.8" fill="none" opacity="0.3"/><path d="M157.8,13.4 L157.8,0.4 L165.2,-7.0 L165.2,-19.2" stroke="#5a7a0c" stroke-width="1.3" fill="none" opacity="0.5"/><path d="M159.3,13.4 L159.3,0.4 L166.7,-7.0 L166.7,-19.2" stroke="#e0e858" stroke-width="0.8" fill="none" opacity="0.3"/><path d="M161.2,13.4 L161.2,0.4 L168.6,-7.0 L168.6,-19.2" stroke="#4a6a08" stroke-width="1.3" fill="none" opacity="0.5"/><path d="M162.7,13.4 L162.7,0.4 L170.1,-7.0 L170.1,-19.2" stroke="#e0e858" stroke-width="0.8" fill="none" opacity="0.3"/><path d="M164.6,13.4 L164.6,0.4 L172.0,-7.0 L172.0,-19.2" stroke="#5a7a0c" stroke-width="1.3" fill="none" opacity="0.5"/><path d="M166.1,13.4 L166.1,0.4 L173.5,-7.0 L173.5,-19.2" stroke="#e0e858" stroke-width="0.8" fill="none" opacity="0.3"/><path d="M168.0,13.4 L168.0,0.4 L175.4,-7.0 L175.4,-19.2" stroke="#4a6a08" stroke-width="1.3" fill="none" opacity="0.5"/><path d="M169.5,13.4 L169.5,0.4 L176.9,-7.0 L176.9,-19.2" stroke="#e0e858" stroke-width="0.8" fill="none" opacity="0.3"/><path d="M179.1,23.0 L179.1,28.8 L167.2,40.7 L167.2,49.8" stroke="#5a7a0c" stroke-width="1.3" fill="none" opacity="0.5"/><path d="M180.6,23.0 L180.6,28.8 L168.7,40.7 L168.7,49.8" stroke="#e0e858" stroke-width="0.8" fill="none" opacity="0.3"/><path d="M182.5,23.0 L182.5,28.8 L170.6,40.7 L170.6,49.8" stroke="#4a6a08" stroke-width="1.3" fill="none" opacity="0.5"/><path d="M184.0,23.0 L184.0,28.8 L172.1,40.7 L172.1,49.8" stroke="#e0e858" stroke-width="0.8" fill="none" opacity="0.3"/><path d="M185.9,23.0 L185.9,28.8 L174.0,40.7 L174.0,49.8" stroke="#5a7a0c" stroke-width="1.3" fill="none" opacity="0.5"/><path d="M187.4,23.0 L187.4,28.8 L175.5,40.7 L175.5,49.8" stroke="#e0e858" stroke-width="0.8" fill="none" opacity="0.3"/><path d="M189.3,23.0 L189.3,28.8 L177.4,40.7 L177.4,49.8" stroke="#4a6a08" stroke-width="1.3" fill="none" opacity="0.5"/><path d="M190.8,23.0 L190.8,28.8 L178.9,40.7 L178.9,49.8" stroke="#e0e858" stroke-width="0.8" fill="none" opacity="0.3"/><path d="M192.7,23.0 L192.7,28.8 L180.8,40.7 L180.8,49.8" stroke="#5a7a0c" stroke-width="1.3" fill="none" opacity="0.5"/><path d="M194.2,23.0 L194.2,28.8 L182.3,40.7 L182.3,49.8" stroke="#e0e858" stroke-width="0.8" fill="none" opacity="0.3"/><path d="M72.0,36.6 L72.0,47.5 L58.0,61.5 L58.0,73.1" stroke="#5a7a0c" stroke-width="1.3" fill="none" opacity="0.5"/><path d="M73.5,36.6 L73.5,47.5 L59.5,61.5 L59.5,73.1" stroke="#e0e858" stroke-width="0.8" fill="none" opacity="0.3"/><path d="M75.4,36.6 L75.4,47.5 L61.4,61.5 L61.4,73.1" stroke="#4a6a08" stroke-width="1.3" fill="none" opacity="0.5"/><path d="M76.9,36.6 L76.9,47.5 L62.9,61.5 L62.9,73.1" stroke="#e0e858" stroke-width="0.8" fill="none" opacity="0.3"/><path d="M78.8,36.6 L78.8,47.5 L64.8,61.5 L64.8,73.1" stroke="#5a7a0c" stroke-width="1.3" fill="none" opacity="0.5"/><path d="M80.3,36.6 L80.3,47.5 L66.3,61.5 L66.3,73.1" stroke="#e0e858" stroke-width="0.8" fill="none" opacity="0.3"/><path d="M82.2,36.6 L82.2,47.5 L68.2,61.5 L68.2,73.1" stroke="#4a6a08" stroke-width="1.3" fill="none" opacity="0.5"/><path d="M83.7,36.6 L83.7,47.5 L69.7,61.5 L69.7,73.1" stroke="#e0e858" stroke-width="0.8" fill="none" opacity="0.3"/><path d="M85.6,36.6 L85.6,47.5 L71.6,61.5 L71.6,73.1" stroke="#5a7a0c" stroke-width="1.3" fill="none" opacity="0.5"/><path d="M87.1,36.6 L87.1,47.5 L73.1,61.5 L73.1,73.1" stroke="#e0e858" stroke-width="0.8" fill="none" opacity="0.3"/><path d="M166.3,30.7 L166.3,37.4 L148.5,55.2 L148.5,66.3" stroke="#5a7a0c" stroke-width="1.3" fill="none" opacity="0.5"/><path d="M167.8,30.7 L167.8,37.4 L150.0,55.2 L150.0,66.3" stroke="#e0e858" stroke-width="0.8" fill="none" opacity="0.3"/><path d="M169.7,30.7 L169.7,37.4 L151.9,55.2 L151.9,66.3" stroke="#4a6a08" stroke-width="1.3" fill="none" opacity="0.5"/><path d="M171.2,30.7 L171.2,37.4 L153.4,55.2 L153.4,66.3" stroke="#e0e858" stroke-width="0.8" fill="none" opacity="0.3"/><path d="M173.1,30.7 L173.1,37.4 L155.3,55.2 L155.3,66.3" stroke="#5a7a0c" stroke-width="1.3" fill="none" opacity="0.5"/><path d="M174.6,30.7 L174.6,37.4 L156.8,55.2 L156.8,66.3" stroke="#e0e858" stroke-width="0.8" fill="none" opacity="0.3"/><path d="M176.5,30.7 L176.5,37.4 L158.7,55.2 L158.7,66.3" stroke="#4a6a08" stroke-width="1.3" fill="none" opacity="0.5"/><path d="M178.0,30.7 L178.0,37.4 L160.2,55.2 L160.2,66.3" stroke="#e0e858" stroke-width="0.8" fill="none" opacity="0.3"/><path d="M179.9,30.7 L179.9,37.4 L162.1,55.2 L162.1,66.3" stroke="#5a7a0c" stroke-width="1.3" fill="none" opacity="0.5"/><path d="M181.4,30.7 L181.4,37.4 L163.6,55.2 L163.6,66.3" stroke="#e0e858" stroke-width="0.8" fill="none" opacity="0.3"/><path d="M183.3,30.7 L183.3,37.4 L165.5,55.2 L165.5,66.3" stroke="#4a6a08" stroke-width="1.3" fill="none" opacity="0.5"/><path d="M184.8,30.7 L184.8,37.4 L167.0,55.2 L167.0,66.3" stroke="#e0e858" stroke-width="0.8" fill="none" opacity="0.3"/><path d="M183.4,26.7 L183.4,35.5 L168.2,50.7 L168.2,58.0" stroke="#5a7a0c" stroke-width="1.3" fill="none" opacity="0.5"/><path d="M184.9,26.7 L184.9,35.5 L169.7,50.7 L169.7,58.0" stroke="#e0e858" stroke-width="0.8" fill="none" opacity="0.3"/><path d="M186.8,26.7 L186.8,35.5 L171.6,50.7 L171.6,58.0" stroke="#4a6a08" stroke-width="1.3" fill="none" opacity="0.5"/><path d="M188.3,26.7 L188.3,35.5 L173.1,50.7 L173.1,58.0" stroke="#e0e858" stroke-width="0.8" fill="none" opacity="0.3"/><path d="M190.2,26.7 L190.2,35.5 L175.0,50.7 L175.0,58.0" stroke="#5a7a0c" stroke-width="1.3" fill="none" opacity="0.5"/><path d="M191.7,26.7 L191.7,35.5 L176.5,50.7 L176.5,58.0" stroke="#e0e858" stroke-width="0.8" fill="none" opacity="0.3"/><path d="M148.0,37.6 L148.0,30.1 L134.2,16.4 L134.2,5.0" stroke="#5a7a0c" stroke-width="1.3" fill="none" opacity="0.5"/><path d="M149.5,37.6 L149.5,30.1 L135.7,16.4 L135.7,5.0" stroke="#e0e858" stroke-width="0.8" fill="none" opacity="0.3"/><path d="M151.4,37.6 L151.4,30.1 L137.6,16.4 L137.6,5.0" stroke="#4a6a08" stroke-width="1.3" fill="none" opacity="0.5"/><path d="M152.9,37.6 L152.9,30.1 L139.1,16.4 L139.1,5.0" stroke="#e0e858" stroke-width="0.8" fill="none" opacity="0.3"/><path d="M154.8,37.6 L154.8,30.1 L141.0,16.4 L141.0,5.0" stroke="#5a7a0c" stroke-width="1.3" fill="none" opacity="0.5"/><path d="M156.3,37.6 L156.3,30.1 L142.5,16.4 L142.5,5.0" stroke="#e0e858" stroke-width="0.8" fill="none" opacity="0.3"/><path d="M158.2,37.6 L158.2,30.1 L144.4,16.4 L144.4,5.0" stroke="#4a6a08" stroke-width="1.3" fill="none" opacity="0.5"/><path d="M159.7,37.6 L159.7,30.1 L145.9,16.4 L145.9,5.0" stroke="#e0e858" stroke-width="0.8" fill="none" opacity="0.3"/><path d="M161.6,37.6 L161.6,30.1 L147.8,16.4 L147.8,5.0" stroke="#5a7a0c" stroke-width="1.3" fill="none" opacity="0.5"/><path d="M163.1,37.6 L163.1,30.1 L149.3,16.4 L149.3,5.0" stroke="#e0e858" stroke-width="0.8" fill="none" opacity="0.3"/><path d="M126.5,38.8 L126.5,25.0 L144.0,7.5 L144.0,-1.6" stroke="#5a7a0c" stroke-width="1.3" fill="none" opacity="0.5"/><path d="M128.0,38.8 L128.0,25.0 L145.5,7.5 L145.5,-1.6" stroke="#e0e858" stroke-width="0.8" fill="none" opacity="0.3"/><path d="M129.9,38.8 L129.9,25.0 L147.4,7.5 L147.4,-1.6" stroke="#4a6a08" stroke-width="1.3" fill="none" opacity="0.5"/><path d="M131.4,38.8 L131.4,25.0 L148.9,7.5 L148.9,-1.6" stroke="#e0e858" stroke-width="0.8" fill="none" opacity="0.3"/><path d="M133.3,38.8 L133.3,25.0 L150.8,7.5 L150.8,-1.6" stroke="#5a7a0c" stroke-width="1.3" fill="none" opacity="0.5"/><path d="M134.8,38.8 L134.8,25.0 L152.3,7.5 L152.3,-1.6" stroke="#e0e858" stroke-width="0.8" fill="none" opacity="0.3"/><path d="M136.7,38.8 L136.7,25.0 L154.2,7.5 L154.2,-1.6" stroke="#4a6a08" stroke-width="1.3" fill="none" opacity="0.5"/><path d="M138.2,38.8 L138.2,25.0 L155.7,7.5 L155.7,-1.6" stroke="#e0e858" stroke-width="0.8" fill="none" opacity="0.3"/><path d="M140.1,38.8 L140.1,25.0 L157.6,7.5 L157.6,-1.6" stroke="#5a7a0c" stroke-width="1.3" fill="none" opacity="0.5"/><path d="M141.6,38.8 L141.6,25.0 L159.1,7.5 L159.1,-1.6" stroke="#e0e858" stroke-width="0.8" fill="none" opacity="0.3"/><path d="M143.5,38.8 L143.5,25.0 L161.0,7.5 L161.0,-1.6" stroke="#4a6a08" stroke-width="1.3" fill="none" opacity="0.5"/><path d="M145.0,38.8 L145.0,25.0 L162.5,7.5 L162.5,-1.6" stroke="#e0e858" stroke-width="0.8" fill="none" opacity="0.3"/><path d="M97.7,16.7 L97.7,9.8 L90.8,2.9 L90.8,-7.8" stroke="#5a7a0c" stroke-width="1.3" fill="none" opacity="0.5"/><path d="M99.2,16.7 L99.2,9.8 L92.3,2.9 L92.3,-7.8" stroke="#e0e858" stroke-width="0.8" fill="none" opacity="0.3"/><path d="M101.1,16.7 L101.1,9.8 L94.2,2.9 L94.2,-7.8" stroke="#4a6a08" stroke-width="1.3" fill="none" opacity="0.5"/><path d="M102.6,16.7 L102.6,9.8 L95.7,2.9 L95.7,-7.8" stroke="#e0e858" stroke-width="0.8" fill="none" opacity="0.3"/><path d="M104.5,16.7 L104.5,9.8 L97.6,2.9 L97.6,-7.8" stroke="#5a7a0c" stroke-width="1.3" fill="none" opacity="0.5"/><path d="M106.0,16.7 L106.0,9.8 L99.1,2.9 L99.1,-7.8" stroke="#e0e858" stroke-width="0.8" fill="none" opacity="0.3"/><path d="M107.9,16.7 L107.9,9.8 L101.0,2.9 L101.0,-7.8" stroke="#4a6a08" stroke-width="1.3" fill="none" opacity="0.5"/><path d="M109.4,16.7 L109.4,9.8 L102.5,2.9 L102.5,-7.8" stroke="#e0e858" stroke-width="0.8" fill="none" opacity="0.3"/><path d="M111.3,16.7 L111.3,9.8 L104.4,2.9 L104.4,-7.8" stroke="#5a7a0c" stroke-width="1.3" fill="none" opacity="0.5"/><path d="M112.8,16.7 L112.8,9.8 L105.9,2.9 L105.9,-7.8" stroke="#e0e858" stroke-width="0.8" fill="none" opacity="0.3"/><path d="M114.7,16.7 L114.7,9.8 L107.8,2.9 L107.8,-7.8" stroke="#4a6a08" stroke-width="1.3" fill="none" opacity="0.5"/><path d="M116.2,16.7 L116.2,9.8 L109.3,2.9 L109.3,-7.8" stroke="#e0e858" stroke-width="0.8" fill="none" opacity="0.3"/><path d="M92.6,35.9 L92.6,42.9 L80.0,55.6 L80.0,68.2" stroke="#5a7a0c" stroke-width="1.3" fill="none" opacity="0.5"/><path d="M94.1,35.9 L94.1,42.9 L81.5,55.6 L81.5,68.2" stroke="#e0e858" stroke-width="0.8" fill="none" opacity="0.3"/><path d="M96.0,35.9 L96.0,42.9 L83.4,55.6 L83.4,68.2" stroke="#4a6a08" stroke-width="1.3" fill="none" opacity="0.5"/><path d="M97.5,35.9 L97.5,42.9 L84.9,55.6 L84.9,68.2" stroke="#e0e858" stroke-width="0.8" fill="none" opacity="0.3"/><path d="M99.4,35.9 L99.4,42.9 L86.8,55.6 L86.8,68.2" stroke="#5a7a0c" stroke-width="1.3" fill="none" opacity="0.5"/><path d="M100.9,35.9 L100.9,42.9 L88.3,55.6 L88.3,68.2" stroke="#e0e858" stroke-width="0.8" fill="none" opacity="0.3"/><path d="M102.8,35.9 L102.8,42.9 L90.2,55.6 L90.2,68.2" stroke="#4a6a08" stroke-width="1.3" fill="none" opacity="0.5"/><path d="M104.3,35.9 L104.3,42.9 L91.7,55.6 L91.7,68.2" stroke="#e0e858" stroke-width="0.8" fill="none" opacity="0.3"/><path d="M106.2,35.9 L106.2,42.9 L93.6,55.6 L93.6,68.2" stroke="#5a7a0c" stroke-width="1.3" fill="none" opacity="0.5"/><path d="M107.7,35.9 L107.7,42.9 L95.1,55.6 L95.1,68.2" stroke="#e0e858" stroke-width="0.8" fill="none" opacity="0.3"/><path d="M109.6,35.9 L109.6,42.9 L97.0,55.6 L97.0,68.2" stroke="#4a6a08" stroke-width="1.3" fill="none" opacity="0.5"/><path d="M111.1,35.9 L111.1,42.9 L98.5,55.6 L98.5,68.2" stroke="#e0e858" stroke-width="0.8" fill="none" opacity="0.3"/><rect x="180" y="0.6" width="115" height="2.4" fill="url(#stripe)"/><rect x="190" y="3.2" width="100" height="1.2" fill="#9ae040" opacity="0.35"/><rect x="180" y="5.3" width="115" height="2.4" fill="url(#stripe)"/><rect x="190" y="7.9" width="100" height="1.2" fill="#9ae040" opacity="0.35"/><rect x="180" y="10.0" width="115" height="2.4" fill="url(#stripe)"/><rect x="190" y="12.6" width="100" height="1.2" fill="#9ae040" opacity="0.35"/><rect x="180" y="14.7" width="115" height="2.4" fill="url(#stripe)"/><rect x="190" y="17.3" width="100" height="1.2" fill="#9ae040" opacity="0.35"/><rect x="180" y="19.4" width="115" height="2.4" fill="url(#stripe)"/><rect x="190" y="22.0" width="100" height="1.2" fill="#9ae040" opacity="0.35"/><rect x="180" y="24.1" width="115" height="2.4" fill="url(#stripe)"/><rect x="190" y="26.7" width="100" height="1.2" fill="#9ae040" opacity="0.35"/><rect x="180" y="28.8" width="115" height="2.4" fill="url(#stripe)"/><rect x="190" y="31.4" width="100" height="1.2" fill="#9ae040" opacity="0.35"/><rect x="180" y="33.5" width="115" height="2.4" fill="url(#stripe)"/><rect x="190" y="36.1" width="100" height="1.2" fill="#9ae040" opacity="0.35"/><rect x="180" y="38.2" width="115" height="2.4" fill="url(#stripe)"/><rect x="190" y="40.8" width="100" height="1.2" fill="#9ae040" opacity="0.35"/><rect x="180" y="42.9" width="115" height="2.4" fill="url(#stripe)"/><rect x="190" y="45.5" width="100" height="1.2" fill="#9ae040" opacity="0.35"/>
<rect x="270" y="0" width="25" height="47" fill="url(#fade)"/>
<rect x="0" y="46" width="295" height="26" fill="url(#gbar)"/>
<rect x="0" y="71" width="295" height="3" fill="#1a1a1a"/>
<rect x="0" y="74" width="294" height="2" fill="#8a9cb0"/>
<polygon points="15.9,14.3 34.3,3.4 52.8,11.7 56.6,11.3 72,0.8 92.6,8.8 91.8,25 103.1,31.5 101.4,54.5 84.7,68.8 62,57 59.5,57 39.4,72.1 18,60.4 14.6,38.2 18.4,35" fill="#262c5c"/>
<g stroke="#20264e" stroke-width="0.7" stroke-linejoin="round">
<polygon points="15.9,14.3 36,22.6 36,36 18.4,35" fill="url(#cl)"/>
<polygon points="15.9,14.3 34.3,3.4 52.8,11.7 36,22.6" fill="url(#ctop)"/>
<polygon points="78,19.7 92.6,8.8 91.8,25 78,32" fill="url(#cr)"/>
<polygon points="56.6,11.3 72,0.8 92.6,8.8 78,19.7" fill="url(#ctop)"/>
<polygon points="36.8,23.5 54,12.2 77.1,20.1 59.5,33.6" fill="url(#ctop)"/>
<polygon points="14.6,38.2 38.5,49.5 39.4,72.1 18,60.4" fill="url(#cl)"/>
<polygon points="38.5,49.5 58.7,34 59.5,57 39.4,72.1" fill="url(#cr)"/>
<polygon points="14.6,38.2 34.3,23.9 58.7,34 38.5,49.5" fill="url(#ctop)"/>
<polygon points="61.2,35.2 85.9,45.7 84.7,68.8 62,57" fill="url(#cl)"/>
<polygon points="85.9,45.7 103.1,31.5 101.4,54.5 84.7,68.8" fill="url(#cr)"/>
<polygon points="61.2,35.2 77.1,21 103.1,31.5 85.9,45.7" fill="url(#ctop)"/>
</g>
<text x="109.6" y="43.6" font-family="Liberation Sans" font-weight="bold" font-size="36" fill="#888" stroke="#8a8a8a" stroke-width="4" stroke-linejoin="round" letter-spacing="-0.8" opacity="0.75">cplusplus</text>
<text x="110" y="44" font-family="Liberation Sans" font-weight="bold" font-size="36" fill="url(#txt)" stroke="#000" stroke-width="2.2" stroke-linejoin="round" letter-spacing="-0.8">cplusplus</text>
<text x="225.7" y="66.2" font-family="Liberation Sans" font-weight="bold" font-size="21" fill="#888" stroke="#8a8a8a" stroke-width="3" stroke-linejoin="round" letter-spacing="0.1" opacity="0.6">.com</text>
<text x="226" y="66.5" font-family="Liberation Sans" font-weight="bold" font-size="21" fill="url(#txt)" stroke="#000" stroke-width="1.8" stroke-linejoin="round" letter-spacing="0.1">.com</text>
</svg>
</div>
<div id="sinput"></div>
<div id="go"></div>
<div id="crumbs"></div>
<div id="crumbline"></div>
<svg style="position:absolute;left:0;top:0" width="700" height="80"><path d="M290.5,48 Q295.5,60 290.5,72" fill="none" stroke="#1a1a1a" stroke-width="1.6"/><path d="M291.5,48 Q296.5,60 291.5,72" fill="none" stroke="#7a7a7a" stroke-width="0.9"/><path d="M387.5,48 Q392.5,60 387.5,72" fill="none" stroke="#1a1a1a" stroke-width="1.6"/><path d="M388.5,48 Q393.5,60 388.5,72" fill="none" stroke="#7a7a7a" stroke-width="0.9"/><path d="M489,48 Q494,60 489,72" fill="none" stroke="#1a1a1a" stroke-width="1.6"/><path d="M490,48 Q495,60 490,72" fill="none" stroke="#7a7a7a" stroke-width="0.9"/><path d="M615,48 Q620,60 615,72" fill="none" stroke="#1a1a1a" stroke-width="1.6"/><path d="M616,48 Q621,60 616,72" fill="none" stroke="#7a7a7a" stroke-width="0.9"/></svg>
<div id="login"></div>
<div style="position:absolute;left:1174px;top:48px;width:3px;height:28px;background:#e8e8e8"></div>
<div id="reg"></div>
<div id="lin"></div>
<div id="loginline"></div>

<div class="t" style="left:307.0px;top:13.0px;font-family:'Liberation Sans';font-size:15px;font-weight:bold;font-style:normal;color:#fff;letter-spacing:0.661px;-webkit-text-stroke:0.35px currentColor">Search:</div>
<div class="t" style="left:589.6px;top:15.8px;font-family:'Liberation Sans';font-size:12px;font-weight:normal;font-style:normal;color:#f4f4f4;letter-spacing:0.584px">Go</div>
<div class="t" style="left:302.0px;top:51.6px;font-family:'Liberation Sans';font-size:14px;font-weight:bold;font-style:normal;color:#fff;letter-spacing:1.287px;-webkit-text-stroke:0.35px currentColor">Reference</div>
<div class="t" style="left:398.0px;top:51.6px;font-family:'Liberation Sans';font-size:14px;font-weight:bold;font-style:normal;color:#fff;letter-spacing:1.742px;-webkit-text-stroke:0.35px currentColor">&lt;sstream&gt;</div>
<div class="t" style="left:500.7px;top:51.6px;font-family:'Liberation Sans';font-size:14px;font-weight:bold;font-style:normal;color:#fff;letter-spacing:1.162px;-webkit-text-stroke:0.35px currentColor">ostringstream</div>
<div class="t" style="left:626.6px;top:51.6px;font-family:'Liberation Sans';font-size:14px;font-weight:bold;font-style:normal;color:#c8c8c8;letter-spacing:1.597px;-webkit-text-stroke:0.35px currentColor">str</div>
<div class="t" style="left:1096.5px;top:28.7px;font-family:'Liberation Sans';font-size:11px;font-weight:normal;font-style:normal;color:#fff;letter-spacing:0.889px">Not logged in</div>
<div class="t" style="left:1001.8px;top:51.5px;font-family:'Liberation Sans';font-size:14px;font-weight:bold;font-style:normal;color:#fff;letter-spacing:1.263px;-webkit-text-stroke:0.35px currentColor">register</div>
<div class="t" style="left:1106.4px;top:51.5px;font-family:'Liberation Sans';font-size:14px;font-weight:bold;font-style:normal;color:#fff;letter-spacing:1.154px;-webkit-text-stroke:0.35px currentColor">log in</div>
<div class="box" style="top:87px;height:120px"></div>
<div class="bh" style="top:87px"></div>
<div class="t" style="left:129.3px;top:89.0px;font-family:'Liberation Sans';font-size:15px;font-weight:bold;font-style:normal;color:#fff;letter-spacing:3.170px;-webkit-text-stroke:0.35px currentColor">C++</div>
<div class="sel" style="top:149px;height:19px"></div>
<div class="t" style="left:9.0px;top:113.0px;font-family:'Liberation Sans';font-size:13px;font-weight:bold;font-style:normal;color:#fff;letter-spacing:0.550px;-webkit-text-stroke:0.35px currentColor">Information</div>
<div class="t" style="left:9.0px;top:132.0px;font-family:'Liberation Sans';font-size:13px;font-weight:bold;font-style:normal;color:#fff;letter-spacing:0.383px;-webkit-text-stroke:0.35px currentColor">Tutorials</div>
<div class="t" style="left:9.0px;top:151.0px;font-family:'Liberation Sans';font-size:13px;font-weight:bold;font-style:normal;color:#fff;letter-spacing:0.641px;-webkit-text-stroke:0.35px currentColor">Reference</div>
<div class="t" style="left:9.0px;top:170.0px;font-family:'Liberation Sans';font-size:13px;font-weight:bold;font-style:normal;color:#fff;letter-spacing:0.471px;-webkit-text-stroke:0.35px currentColor">Articles</div>
<div class="t" style="left:9.0px;top:189.0px;font-family:'Liberation Sans';font-size:13px;font-weight:bold;font-style:normal;color:#fff;letter-spacing:-0.113px;-webkit-text-stroke:0.35px currentColor">Forum</div>
<div class="box" style="top:217px;height:303px"></div>
<div class="bh" style="top:217px"><div class=az><svg width="17" height="17" viewBox="0 0 17 17"><path d="M1.5,3.5 H6.5 L8.5,0.3 L10.5,3.5 H15.5 V13 H10.5 L8.5,16.5 L6.5,13 H1.5 Z" fill="#f4f4f4" stroke="#d8d8d8" stroke-width="0.8" stroke-linejoin="round"/><line x1="8.5" y1="1.5" x2="8.5" y2="15.5" stroke="#aaa" stroke-width="0.7"/><text x="2.4" y="10.6" font-family="Liberation Sans" font-weight="bold" font-size="9.5" fill="#6a6a6a">a</text><text x="9.6" y="10.6" font-family="Liberation Sans" font-weight="bold" font-size="9.5" fill="#5a5a5a">z</text></svg></div></div>
<div class="t" style="left:98.6px;top:219.0px;font-family:'Liberation Sans';font-size:15px;font-weight:bold;font-style:normal;color:#fff;letter-spacing:0.682px;-webkit-text-stroke:0.35px currentColor">Reference</div>
<div class="sel" style="top:439px;height:21px"></div>
<div class="pm plus" style="top:244px"></div>
<div class="t" style="left:29.0px;top:243.5px;font-family:'Liberation Sans';font-size:13px;font-weight:bold;font-style:italic;color:#fff;letter-spacing:0.214px;-webkit-text-stroke:0.35px currentColor">C library:</div>
<div class="pm plus" style="top:263px"></div>
<div class="t" style="left:29.0px;top:262.7px;font-family:'Liberation Sans';font-size:13px;font-weight:bold;font-style:italic;color:#fff;letter-spacing:0.277px;-webkit-text-stroke:0.35px currentColor">Containers:</div>
<div class="pm" style="top:283px"></div>
<div class="t" style="left:29.0px;top:281.8px;font-family:'Liberation Sans';font-size:13px;font-weight:bold;font-style:italic;color:#fff;letter-spacing:0.724px;-webkit-text-stroke:0.35px currentColor">Input/Output:</div>
<div class="vl" style="top:293px;height:177px"></div>
<div class="li" style="top:298px;height:20px;width:78px"></div>
<div class="t" style="left:31.3px;top:300.5px;font-family:'Liberation Sans';font-size:13px;font-weight:bold;font-style:normal;color:#fff;letter-spacing:1.193px;-webkit-text-stroke:0.35px currentColor">&lt;fstream&gt;</div>
<div class="hd" style="top:307px"></div>
<div class="li" style="top:318px;height:20px;width:76px"></div>
<div class="t" style="left:31.3px;top:320.5px;font-family:'Liberation Sans';font-size:13px;font-weight:bold;font-style:normal;color:#fff;letter-spacing:0.584px;-webkit-text-stroke:0.35px currentColor">&lt;iomanip&gt;</div>
<div class="hd" style="top:327px"></div>
<div class="li" style="top:338px;height:20px;width:45px"></div>
<div class="t" style="left:31.3px;top:340.5px;font-family:'Liberation Sans';font-size:13px;font-weight:bold;font-style:normal;color:#fff;letter-spacing:1.183px;-webkit-text-stroke:0.35px currentColor">&lt;ios&gt;</div>
<div class="hd" style="top:347px"></div>
<div class="li" style="top:358px;height:20px;width:69px"></div>
<div class="t" style="left:31.3px;top:360.5px;font-family:'Liberation Sans';font-size:13px;font-weight:bold;font-style:normal;color:#fff;letter-spacing:0.906px;-webkit-text-stroke:0.35px currentColor">&lt;iosfwd&gt;</div>
<div class="hd" style="top:367px"></div>
<div class="li" style="top:378px;height:21px;width:84px"></div>
<div class="t" style="left:31.3px;top:380.5px;font-family:'Liberation Sans';font-size:13px;font-weight:bold;font-style:normal;color:#fff;letter-spacing:0.925px;-webkit-text-stroke:0.35px currentColor">&lt;iostream&gt;</div>
<div class="hd" style="top:387px"></div>
<div class="li" style="top:399px;height:20px;width:76px"></div>
<div class="t" style="left:31.3px;top:401.5px;font-family:'Liberation Sans';font-size:13px;font-weight:bold;font-style:normal;color:#fff;letter-spacing:1.033px;-webkit-text-stroke:0.35px currentColor">&lt;istream&gt;</div>
<div class="hd" style="top:408px"></div>
<div class="li" style="top:419px;height:20px;width:81px"></div>
<div class="t" style="left:31.3px;top:421.5px;font-family:'Liberation Sans';font-size:13px;font-weight:bold;font-style:normal;color:#fff;letter-spacing:1.117px;-webkit-text-stroke:0.35px currentColor">&lt;ostream&gt;</div>
<div class="hd" style="top:428px"></div>
<div class="t" style="left:31.3px;top:441.5px;font-family:'Liberation Sans';font-size:13px;font-weight:bold;font-style:normal;color:#fff;letter-spacing:1.080px;-webkit-text-stroke:0.35px currentColor">&lt;sstream&gt;</div>
<div class="hd" style="top:448px"></div>
<div class="li" style="top:459px;height:21px;width:94px"></div>
<div class="t" style="left:31.3px;top:461.5px;font-family:'Liberation Sans';font-size:13px;font-weight:bold;font-style:normal;color:#fff;letter-spacing:0.965px;-webkit-text-stroke:0.35px currentColor">&lt;streambuf&gt;</div>
<div class="hd" style="top:469px"></div>
<div class="pm plus" style="top:484px"></div>
<div class="t" style="left:29.0px;top:483.5px;font-family:'Liberation Sans';font-size:13px;font-weight:bold;font-style:italic;color:#fff;letter-spacing:0.452px;-webkit-text-stroke:0.35px currentColor">Multi-threading:</div>
<div class="pm plus" style="top:503px"></div>
<div class="t" style="left:29.0px;top:502.3px;font-family:'Liberation Sans';font-size:13px;font-weight:bold;font-style:italic;color:#fff;letter-spacing:0.600px;-webkit-text-stroke:0.35px currentColor">Other:</div>
<div class="box" style="top:529px;height:306px"></div>
<div class="bh" style="top:529px"></div>
<div class="t" style="left:105.2px;top:531.0px;font-family:'Liberation Sans';font-size:15px;font-weight:bold;font-style:normal;color:#fff;letter-spacing:1.105px;-webkit-text-stroke:0.35px currentColor">&lt;sstream&gt;</div>
<div class="sel" style="top:692px;height:20px"></div>
<div class="pm" style="top:557px"></div>
<div class="t" style="left:29.0px;top:555.5px;font-family:'Liberation Sans';font-size:13px;font-weight:bold;font-style:italic;color:#d4d4d4;letter-spacing:0.322px">class templates:</div>
<div class="vl" style="top:568px;height:75px"></div>
<div class="li" style="top:572px;height:20px;width:133px"></div>
<div class="t" style="left:31.3px;top:574.5px;font-family:'Liberation Sans';font-size:13px;font-weight:bold;font-style:normal;color:#fff;letter-spacing:0.214px;-webkit-text-stroke:0.35px currentColor">basic_istringstream</div>
<div class="hd" style="top:581px"></div>
<div class="li" style="top:592px;height:20px;width:138px"></div>
<div class="t" style="left:31.3px;top:594.5px;font-family:'Liberation Sans';font-size:13px;font-weight:bold;font-style:normal;color:#fff;letter-spacing:0.252px;-webkit-text-stroke:0.35px currentColor">basic_ostringstream</div>
<div class="hd" style="top:601px"></div>
<div class="li" style="top:612px;height:20px;width:105px"></div>
<div class="t" style="left:31.3px;top:614.5px;font-family:'Liberation Sans';font-size:13px;font-weight:bold;font-style:normal;color:#fff;letter-spacing:0.136px;-webkit-text-stroke:0.35px currentColor">basic_stringbuf</div>
<div class="hd" style="top:621px"></div>
<div class="li" style="top:632px;height:20px;width:130px"></div>
<div class="t" style="left:31.3px;top:634.5px;font-family:'Liberation Sans';font-size:13px;font-weight:bold;font-style:normal;color:#fff;letter-spacing:0.263px;-webkit-text-stroke:0.35px currentColor">basic_stringstream</div>
<div class="hd" style="top:641px"></div>
<div class="pm" style="top:656px"></div>
<div class="t" style="left:29.0px;top:655.5px;font-family:'Liberation Sans';font-size:13px;font-weight:bold;font-style:italic;color:#d4d4d4;letter-spacing:0.239px">classes:</div>
<div class="vl" style="top:667px;height:155px"></div>
<div class="li" style="top:672px;height:20px;width:92px"></div>
<div class="t" style="left:31.3px;top:674.5px;font-family:'Liberation Sans';font-size:13px;font-weight:bold;font-style:normal;color:#fff;letter-spacing:0.277px;-webkit-text-stroke:0.35px currentColor">istringstream</div>
<div class="hd" style="top:681px"></div>
<div class="t" style="left:31.3px;top:694.5px;font-family:'Liberation Sans';font-size:13px;font-weight:bold;font-style:normal;color:#fff;letter-spacing:0.250px;-webkit-text-stroke:0.35px currentColor">ostringstream</div>
<div class="hd" style="top:701px"></div>
<div class="li" style="top:712px;height:20px;width:64px"></div>
<div class="t" style="left:31.3px;top:714.5px;font-family:'Liberation Sans';font-size:13px;font-weight:bold;font-style:normal;color:#fff;letter-spacing:0.171px;-webkit-text-stroke:0.35px currentColor">stringbuf</div>
<div class="hd" style="top:721px"></div>
<div class="li" style="top:732px;height:20px;width:88px"></div>
<div class="t" style="left:31.3px;top:734.5px;font-family:'Liberation Sans';font-size:13px;font-weight:bold;font-style:normal;color:#fff;letter-spacing:0.268px;-webkit-text-stroke:0.35px currentColor">stringstream</div>
<div class="hd" style="top:741px"></div>
<div class="li" style="top:752px;height:20px;width:90px"></div>
<div class="t" style="left:31.3px;top:754.5px;font-family:'Liberation Sans';font-size:13px;font-weight:normal;font-style:normal;color:#fff;letter-spacing:-0.007px">wistringstream</div>
<div class="hd" style="top:761px"></div>
<div class="li" style="top:772px;height:20px;width:94px"></div>
<div class="t" style="left:31.3px;top:774.5px;font-family:'Liberation Sans';font-size:13px;font-weight:normal;font-style:normal;color:#fff;letter-spacing:-0.034px">wostringstream</div>
<div class="hd" style="top:781px"></div>
<div class="li" style="top:792px;height:20px;width:65px"></div>
<div class="t" style="left:31.3px;top:794.5px;font-family:'Liberation Sans';font-size:13px;font-weight:normal;font-style:normal;color:#fff;letter-spacing:-0.061px">wstringbuf</div>
<div class="hd" style="top:801px"></div>
<div class="li" style="top:812px;height:20px;width:86px"></div>
<div class="t" style="left:31.3px;top:814.5px;font-family:'Liberation Sans';font-size:13px;font-weight:normal;font-style:normal;color:#fff;letter-spacing:-0.102px">wstringstream</div>
<div class="hd" style="top:821px"></div>
<div class="box" style="top:845px;height:106px"></div>
<div class="bh" style="top:845px"><div class=az><svg width="17" height="17" viewBox="0 0 17 17"><path d="M1.5,3.5 H6.5 L8.5,0.3 L10.5,3.5 H15.5 V13 H10.5 L8.5,16.5 L6.5,13 H1.5 Z" fill="#f4f4f4" stroke="#d8d8d8" stroke-width="0.8" stroke-linejoin="round"/><line x1="8.5" y1="1.5" x2="8.5" y2="15.5" stroke="#aaa" stroke-width="0.7"/><text x="2.4" y="10.6" font-family="Liberation Sans" font-weight="bold" font-size="9.5" fill="#6a6a6a">a</text><text x="9.6" y="10.6" font-family="Liberation Sans" font-weight="bold" font-size="9.5" fill="#5a5a5a">z</text></svg></div></div>
<div class="t" style="left:83.5px;top:847.0px;font-family:'Liberation Sans';font-size:15px;font-weight:bold;font-style:normal;color:#fff;letter-spacing:0.647px;-webkit-text-stroke:0.35px currentColor">ostringstream</div>
<div class="li" style="top:867px;height:21px;width:173px;left:9px"></div>
<div class="t" style="left:12.0px;top:870.8px;font-family:'Liberation Sans';font-size:13px;font-weight:normal;font-style:normal;color:#fff;letter-spacing:0.139px">ostringstream::ostringstream</div>
<div class="pm" style="top:892px"></div>
<div class="t" style="left:29.0px;top:890.4px;font-family:'Liberation Sans';font-size:13px;font-weight:bold;font-style:italic;color:#d4d4d4;letter-spacing:0.135px">public member functions:</div>
<div class="t" style="left:302.0px;top:90.0px;font-family:'Liberation Sans';font-size:14px;font-weight:normal;font-style:normal;color:#dcdcdc;letter-spacing:0.940px">public member function</div>
<div class="t" style="left:302.0px;top:119.0px;font-family:'Liberation Sans';font-size:15px;font-weight:bold;font-style:normal;color:#5a58a8;letter-spacing:0.875px;-webkit-text-stroke:0.35px currentColor">std::</div>
<div class="t" style="left:338.7px;top:109.0px;font-family:'Liberation Sans';font-size:27px;font-weight:bold;font-style:normal;color:#46a4ff;letter-spacing:1.495px;-webkit-text-stroke:0.60px currentColor">ostringstream</div>
<div class="t" style="left:540.0px;top:109.0px;font-family:'Liberation Sans';font-size:27px;font-weight:bold;font-style:normal;color:#d8d8d8;letter-spacing:1.375px;-webkit-text-stroke:0.60px currentColor">::str</div>
<div class="t" style="left:1105.0px;top:107.5px;font-family:'Liberation Mono';font-size:13px;font-weight:normal;font-style:normal;color:#dcdcdc;letter-spacing:0.098px">&lt;sstream&gt;</div>
<div class="proto" style="top:143px;height:36px"></div>
<div class="t" style="left:302.0px;top:146.7px;font-family:'Liberation Mono';font-size:13px;font-weight:normal;font-style:normal;color:#4a98e0;letter-spacing:0.154px">string str() const;</div>
<div class="t" style="left:302.0px;top:162.8px;font-family:'Liberation Mono';font-size:13px;font-weight:normal;font-style:normal;color:#4a98e0;letter-spacing:0.179px">void str (const string&amp; s);</div>
<div class="t" style="left:302.0px;top:186.4px;font-family:'Liberation Sans';font-size:14px;font-weight:bold;font-style:normal;color:#dcdcdc;letter-spacing:1.564px;-webkit-text-stroke:0.35px currentColor">Get/set content</div>
<div class="t" style="left:302.0px;top:211.5px;font-family:'Liberation Sans';font-size:14px;font-weight:normal;font-style:normal;color:#dcdcdc;letter-spacing:1.035px">The first form <i>(1)</i> returns a <span class="m" style="color:#4a98e0">string</span> object with a copy of the current contents of the stream.</div>
<div class="t" style="left:302.0px;top:251.3px;font-family:'Liberation Sans';font-size:14px;font-weight:normal;font-style:normal;color:#dcdcdc;letter-spacing:0.997px">The second form <i>(2)</i> sets <i>s</i> as the contents of the stream, discarding any previous contents. The object preserves its <i>open</i></div>
<div class="t" style="left:302.0px;top:270.2px;font-family:'Liberation Sans';font-size:14px;font-weight:normal;font-style:normal;color:#dcdcdc;letter-spacing:0.919px"><i>mode</i>: if this includes <span class="m" style="color:#dcdcdc">ios_base::ate</span>, the <i>writing position</i> is moved to the end of the new sequence.</div>
<div class="t" style="left:302.0px;top:309.4px;font-family:'Liberation Sans';font-size:14px;font-weight:normal;font-style:normal;color:#dcdcdc;letter-spacing:0.973px">Internally, the function calls the <span class="m" style="color:#4a98e0">str</span> member of its <i style="color:#4aa0f0">internal string buffer</i> object.</div>
<div class="ico" style="top:363px"><svg width="19" height="19" viewBox="0 0 19 19"><defs><linearGradient id="gp" x1="0" y1="0" x2="1" y2="1"><stop offset="0" stop-color="#f4cc98"/><stop offset="1" stop-color="#d8a468"/></linearGradient><clipPath id="cp1"><rect x="0" y="0" width="19" height="19" rx="4.5"/></clipPath></defs><g clip-path="url(#cp1)"><rect x="0" y="0" width="19" height="19" fill="#fcfcfc"/><path d="M-1,1 L19,19.5 L-1,19.5 Z" fill="url(#gp)"/><path d="M4.2,9 L4.2,14.6 L10,14.6 Z" fill="#fff"/><path d="M1.5,5 V18 M1.5,17.5 H15" stroke="#c89058" stroke-width="0.8" stroke-dasharray="1,1" fill="none" opacity="0.7"/></g></svg></div>
<div class="t" style="left:328.0px;top:365.1px;font-family:'Liberation Sans';font-size:17px;font-weight:bold;font-style:normal;color:#dcdcdc;letter-spacing:1.908px;-webkit-text-stroke:0.35px currentColor">Parameters</div>
<div class="navy" style="top:384px"></div>
<div class="proto" style="top:399px;height:17px;border-top:none"></div>
<div class="t" style="left:302.0px;top:399.8px;font-family:'Liberation Mono';font-size:13px;font-weight:normal;font-style:normal;color:#d0d0d0;letter-spacing:0.797px">str</div>
<div class="t" style="left:350.5px;top:417.8px;font-family:'Liberation Sans';font-size:14px;font-weight:normal;font-style:normal;color:#dcdcdc;letter-spacing:0.867px">A <span class="m" style="color:#4a98e0">string</span> object, whose content is copied.</div>
<div class="ico" style="top:486px"><svg width="19" height="19" viewBox="0 0 19 19"><defs><linearGradient id="gr" x1="0" y1="0" x2="0" y2="1"><stop offset="0" stop-color="#90d0f8"/><stop offset="1" stop-color="#18a0f0"/></linearGradient></defs><rect x="0" y="0" width="19" height="19" rx="4.5" fill="#fcfcfc"/><path d="M3.3,1.5 H14 A4.6,6.5 0 0 1 14,14.5 H7.3 V17.8 L1.8,12.5 L7.3,7.4 V10.9 H14 A1,2.65 0 0 0 14,5.6 H3.3 Z" fill="url(#gr)"/></svg></div>
<div class="t" style="left:328.0px;top:487.6px;font-family:'Liberation Sans';font-size:17px;font-weight:bold;font-style:normal;color:#dcdcdc;letter-spacing:1.753px;-webkit-text-stroke:0.35px currentColor">Return Value</div>
<div class="navy" style="top:507px"></div>
<div class="t" style="left:302.0px;top:515.6px;font-family:'Liberation Sans';font-size:14px;font-weight:normal;font-style:normal;color:#dcdcdc;letter-spacing:0.999px">For <i>(1)</i>, a <span class="m" style="color:#4a98e0">string</span> object with a copy of the current contents in the <i>stream buffer</i>.</div>
<div class="ico" style="top:570px"><svg width="19" height="19" viewBox="0 0 19 19"><defs><radialGradient id="gb" cx="0.4" cy="0.3" r="0.7"><stop offset="0" stop-color="#f6f6c8"/><stop offset="0.6" stop-color="#e0e070"/><stop offset="1" stop-color="#e8e8a0"/></radialGradient></defs><rect x="0" y="0" width="19" height="19" rx="4.5" fill="#fcfcfc"/><path d="M10,0.6 C13.6,0.6 15.8,3 15.8,6.3 C15.8,9.3 13,11 12.3,14.6 H7.7 C7,11 4.2,9.3 4.2,6.3 C4.2,3 6.4,0.6 10,0.6 Z" fill="url(#gb)" stroke="#d4aa70" stroke-width="0.9"/><rect x="7.9" y="14.6" width="4.4" height="2.8" fill="#a8a8a8"/><path d="M9,14.8 V17.2 M11.2,14.8 V17.2" stroke="#e8e8e8" stroke-width="0.7"/></svg></div>
<div class="t" style="left:328.0px;top:571.5px;font-family:'Liberation Sans';font-size:17px;font-weight:bold;font-style:normal;color:#dcdcdc;letter-spacing:1.844px;-webkit-text-stroke:0.35px currentColor">Example</div>
<div class="navy" style="top:591px"></div>
<div class="code" style="top:601px;left:333px;width:365px;height:208px"></div>
<div class="gear" style="top:601px;left:698px"><svg width="21" height="21" viewBox="0 0 21 21"><path d="M0.5,0.5 H17.5 A3,3 0 0 1 20.5,3.5 V17.5 A3,3 0 0 1 17.5,20.5 H0.5 Z" fill="#0c0c0c" stroke="#c8c8dc" stroke-width="1"/><g transform="translate(10.5,10)" fill="#d4d4d8"><circle r="4.6"/><rect x="-1.1" y="-7.2" width="2.2" height="4" rx="0.6" transform="rotate(0)"/><rect x="-1.1" y="-7.2" width="2.2" height="4" rx="0.6" transform="rotate(45)"/><rect x="-1.1" y="-7.2" width="2.2" height="4" rx="0.6" transform="rotate(90)"/><rect x="-1.1" y="-7.2" width="2.2" height="4" rx="0.6" transform="rotate(135)"/><rect x="-1.1" y="-7.2" width="2.2" height="4" rx="0.6" transform="rotate(180)"/><rect x="-1.1" y="-7.2" width="2.2" height="4" rx="0.6" transform="rotate(225)"/><rect x="-1.1" y="-7.2" width="2.2" height="4" rx="0.6" transform="rotate(270)"/><rect x="-1.1" y="-7.2" width="2.2" height="4" rx="0.6" transform="rotate(315)"/><circle r="2.1" fill="#0c0c0c"/></g></svg></div>
<div class="t" style="right:863px;top:602.4px;font-family:'Liberation Sans';font-size:13px;font-weight:normal;font-style:normal;color:#c8c8c8">1</div>
<div class="t" style="left:337.0px;top:603.7px;font-family:'Liberation Mono';font-size:13px;font-weight:normal;font-style:normal;color:#e8e8e8;letter-spacing:0.200px"><span style="color:#808080">// ostringstream::rdbuf</span></div>
<div class="t" style="right:863px;top:619.5px;font-family:'Liberation Sans';font-size:13px;font-weight:normal;font-style:normal;color:#c8c8c8">2</div>
<div class="t" style="left:337.0px;top:620.8px;font-family:'Liberation Mono';font-size:13px;font-weight:normal;font-style:normal;color:#e8e8e8;letter-spacing:0.200px"><span style="color:#f0900c">#include &lt;string&gt;</span><span style="color:#808080">       // std::string</span></div>
<div class="t" style="right:863px;top:636.5px;font-family:'Liberation Sans';font-size:13px;font-weight:normal;font-style:normal;color:#c8c8c8">3</div>
<div class="t" style="left:337.0px;top:637.8px;font-family:'Liberation Mono';font-size:13px;font-weight:normal;font-style:normal;color:#e8e8e8;letter-spacing:0.200px"><span style="color:#f0900c">#include &lt;iostream&gt;</span><span style="color:#808080">     // std::cout</span></div>
<div class="t" style="right:863px;top:653.6px;font-family:'Liberation Sans';font-size:13px;font-weight:normal;font-style:normal;color:#c8c8c8">4</div>
<div class="t" style="left:337.0px;top:654.9px;font-family:'Liberation Mono';font-size:13px;font-weight:normal;font-style:normal;color:#e8e8e8;letter-spacing:0.200px"><span style="color:#f0900c">#include &lt;sstream&gt;</span><span style="color:#808080">      // std::ostringstream</span></div>
<div class="t" style="right:863px;top:670.7px;font-family:'Liberation Sans';font-size:13px;font-weight:normal;font-style:normal;color:#c8c8c8">5</div>
<div class="t" style="right:863px;top:687.8px;font-family:'Liberation Sans';font-size:13px;font-weight:normal;font-style:normal;color:#c8c8c8">6</div>
<div class="t" style="left:337.0px;top:689.0px;font-family:'Liberation Mono';font-size:13px;font-weight:normal;font-style:normal;color:#e8e8e8;letter-spacing:0.200px"><span style="color:#90d040">int</span><span style="color:#e8e8e8"> main () {</span></div>
<div class="t" style="right:863px;top:704.8px;font-family:'Liberation Sans';font-size:13px;font-weight:normal;font-style:normal;color:#c8c8c8">7</div>
<div class="t" style="left:337.0px;top:706.1px;font-family:'Liberation Mono';font-size:13px;font-weight:normal;font-style:normal;color:#e8e8e8;letter-spacing:0.200px"><span style="color:#e8e8e8">  std::ostringstream oss;</span></div>
<div class="t" style="right:863px;top:721.9px;font-family:'Liberation Sans';font-size:13px;font-weight:normal;font-style:normal;color:#c8c8c8">8</div>
<div class="t" style="left:337.0px;top:723.2px;font-family:'Liberation Mono';font-size:13px;font-weight:normal;font-style:normal;color:#e8e8e8;letter-spacing:0.200px"><span style="color:#e8e8e8">  oss &lt;&lt; </span><span style="color:#e8d070">&quot;One hundred and one: &quot;</span><span style="color:#e8e8e8"> &lt;&lt; 101;</span></div>
<div class="t" style="right:863px;top:739.0px;font-family:'Liberation Sans';font-size:13px;font-weight:normal;font-style:normal;color:#c8c8c8">9</div>
<div class="t" style="left:337.0px;top:740.3px;font-family:'Liberation Mono';font-size:13px;font-weight:normal;font-style:normal;color:#e8e8e8;letter-spacing:0.200px"><span style="color:#e8e8e8">  std::string s = oss.str();</span></div>
<div class="t" style="right:863px;top:756.0px;font-family:'Liberation Sans';font-size:13px;font-weight:normal;font-style:normal;color:#c8c8c8">10</div>
<div class="t" style="left:337.0px;top:757.3px;font-family:'Liberation Mono';font-size:13px;font-weight:normal;font-style:normal;color:#e8e8e8;letter-spacing:0.200px"><span style="color:#e8e8e8">  std::cout &lt;&lt; s &lt;&lt; </span><span style="color:#e8d070">&#x27;\n&#x27;</span><span style="color:#e8e8e8">;</span></div>
<div class="t" style="right:863px;top:773.1px;font-family:'Liberation Sans';font-size:13px;font-weight:normal;font-style:normal;color:#c8c8c8">11</div>
<div class="t" style="left:337.0px;top:774.4px;font-family:'Liberation Mono';font-size:13px;font-weight:normal;font-style:normal;color:#e8e8e8;letter-spacing:0.200px"><span style="color:#e8e8e8">  </span><span style="color:#90d040">return</span><span style="color:#e8e8e8"> 0;</span></div>
<div class="t" style="right:863px;top:790.2px;font-family:'Liberation Sans';font-size:13px;font-weight:normal;font-style:normal;color:#c8c8c8">12</div>
<div class="t" style="left:337.0px;top:791.5px;font-family:'Liberation Mono';font-size:13px;font-weight:normal;font-style:normal;color:#e8e8e8;letter-spacing:0.200px"><span style="color:#e8e8e8">}</span></div>
<div class="out" style="top:852px;left:305px;width:196px;height:21px"></div>
<div class="t" style="left:308.0px;top:854.6px;font-family:'Liberation Mono';font-size:13px;font-weight:normal;font-style:normal;color:#f0f0f0;letter-spacing:0.164px">One hundred and one: 101</div>
</body></html>
